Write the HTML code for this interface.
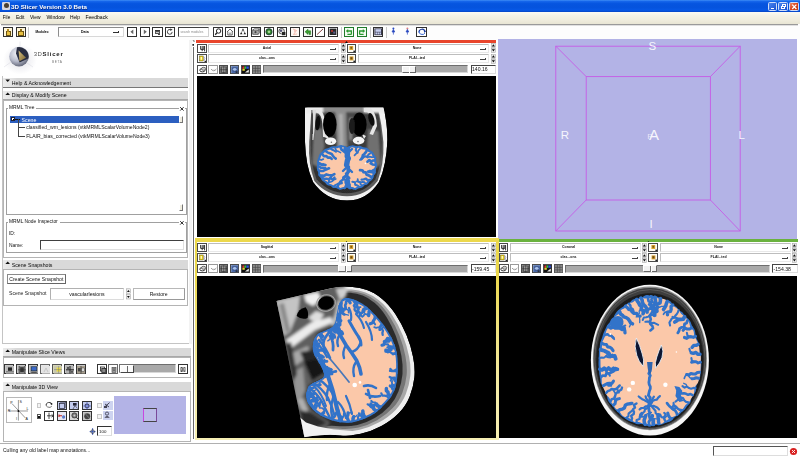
<!DOCTYPE html>
<html><head><meta charset="utf-8"><title>3D Slicer Version 3.0 Beta</title>
<style>
html,body{margin:0;padding:0;}
body{width:800px;height:457px;overflow:hidden;background:#fff;position:relative;font-family:"Liberation Sans",sans-serif;}
body div{position:absolute;}
svg{position:absolute;overflow:hidden;}
.t{overflow:visible;filter:blur(0.22px);}
</style></head><body>
<div style="left:0px;top:0px;width:800px;height:12px;background:linear-gradient(#3f8ef6 0%,#1565ea 12%,#0655e0 30%,#0553dd 60%,#0758e6 85%,#0644c4 100%);"></div>
<div style="left:2px;top:1.5px;width:8px;height:8px;background:#d8d8e0;border-radius:1px;"></div>
<div style="left:3.5px;top:3px;width:5px;height:5px;background:#4a4030;border-radius:3px;"></div>
<div class="t" style="left:11px;top:1.5px;height:10px;line-height:10px;font-size:6.2px;color:#fff;white-space:nowrap;font-weight:bold;text-shadow:0.5px 0.5px 0 #0a2a80;">3D Slicer Version 3.0 Beta</div>
<div style="left:767.5px;top:1.5px;width:9.5px;height:9px;background:linear-gradient(135deg,#4a86f0,#1c52d0);border:0.6px solid #cfdcf8;box-sizing:border-box;border-radius:1.5px;"><div style="left:2px;top:5.5px;width:3.5px;height:1.3px;background:#fff"></div></div>
<div style="left:778.3px;top:1.5px;width:9.5px;height:9px;background:linear-gradient(135deg,#4a86f0,#1c52d0);border:0.6px solid #cfdcf8;box-sizing:border-box;border-radius:1.5px;"><div style="left:3.2px;top:1.6px;width:3.4px;height:3px;border:0.8px solid #fff;box-sizing:border-box"></div><div style="left:1.8px;top:3.4px;width:3.6px;height:3.2px;border:0.8px solid #fff;box-sizing:border-box;background:#2a60d8"></div></div>
<div style="left:789.2px;top:1.5px;width:9.5px;height:9px;background:linear-gradient(135deg,#ec8a6a,#d8431c 50%,#c23a14);border:0.6px solid #cfdcf8;box-sizing:border-box;border-radius:1.5px;"><svg width="9" height="8" viewBox="0 0 9 8" style="left:0;top:0"><path d="M2.2 1.6 L6.4 6 M6.4 1.6 L2.2 6" stroke="#fff" stroke-width="1.3" fill="none"/></svg></div>
<div style="left:0px;top:12px;width:800px;height:12px;background:linear-gradient(#fbfaf4 0%,#f4f2e6 30%,#efecdd 70%,#e8e5d4 100%);"></div>
<div class="t" style="left:2.7px;top:12.7px;height:9px;line-height:9px;font-size:4.7px;color:#000;white-space:nowrap;">File</div>
<div class="t" style="left:16px;top:12.7px;height:9px;line-height:9px;font-size:4.9px;color:#000;white-space:nowrap;">Edit</div>
<div class="t" style="left:30px;top:12.7px;height:9px;line-height:9px;font-size:4.9px;color:#000;white-space:nowrap;">View</div>
<div class="t" style="left:46.4px;top:12.7px;height:9px;line-height:9px;font-size:5.2px;color:#000;white-space:nowrap;">Window</div>
<div class="t" style="left:70px;top:12.7px;height:9px;line-height:9px;font-size:4.9px;color:#000;white-space:nowrap;">Help</div>
<div class="t" style="left:85.4px;top:12.7px;height:9px;line-height:9px;font-size:5.1px;color:#000;white-space:nowrap;">Feedback</div>
<div style="left:0px;top:24px;width:800px;height:16px;background:#fdfdfd;"></div>
<div style="left:1px;top:24px;width:797px;height:0.8px;background:#9a9a9a;"></div>
<div style="left:1px;top:24.8px;width:797px;height:0.7px;background:#e0e0e0;"></div>
<div style="left:3.2px;top:27.2px;width:10px;height:9.6px;background:#fff6d8;border:0.8px solid #303030;box-sizing:border-box;"><div style="left:1.5px;top:2.6px;width:5.5px;height:5px;background:#e8c040;border:0.5px solid #6b5210;box-sizing:border-box"></div><div style="left:2.6px;top:1px;width:2.6px;height:2.4px;background:#b08a20"></div></div>
<div style="left:15.5px;top:27.2px;width:10px;height:9.6px;background:#fff6d8;border:0.8px solid #303030;box-sizing:border-box;"><div style="left:1.5px;top:3.2px;width:6px;height:4.6px;background:#e8c040;border:0.5px solid #6b5210;box-sizing:border-box"></div><div style="left:3px;top:0.8px;width:2.6px;height:3px;background:#8a6a18"></div></div>
<div style="left:28.2px;top:26.5px;width:0.7px;height:11px;background:#c8c8c8;"></div>
<div class="t" style="left:35.5px;top:28.200000000000003px;height:8px;line-height:8px;font-size:3.15px;color:#000;white-space:nowrap;font-weight:bold;">Modules:</div>
<div style="left:58px;top:27px;width:65.5px;height:9.6px;background:#fff;border:0.8px solid #8c8c8c;box-sizing:border-box;border-right-color:#d8d8d8;border-bottom-color:#d8d8d8;"></div>
<div class="t" style="left:58px;top:28.200000000000003px;height:8px;line-height:8px;font-size:3.55px;color:#000;white-space:nowrap;font-weight:bold;width:53.6px;text-align:center;">Data</div>
<div style="left:112.6px;top:32.2px;width:6px;height:1.3px;background:#303030;"></div>
<div style="left:118px;top:30.8px;width:0.8px;height:2.7px;background:#303030;"></div>
<div style="left:127px;top:27px;width:10px;height:9.6px;background:#fff;border:0.8px solid #303030;box-sizing:border-box;"><svg width="10" height="9" viewBox="0 0 10 9" style="left:-0.8px;top:-0.8px"><path d="M6.3 2.4 L3.4 4.8 L6.3 7.2 Z" fill="#666"/></svg></div>
<div style="left:139.5px;top:27px;width:10px;height:9.6px;background:#fff;border:0.8px solid #303030;box-sizing:border-box;"><svg width="10" height="9" viewBox="0 0 10 9" style="left:-0.8px;top:-0.8px"><path d="M3.8 2.4 L6.8 4.8 L3.8 7.2 Z" fill="#666"/></svg></div>
<div style="left:152.2px;top:27px;width:10.4px;height:9.6px;background:#fff;border:0.8px solid #303030;box-sizing:border-box;"><div style="left:1.4px;top:1.6px;width:5.6px;height:1.6px;background:#333"></div><div style="left:1.4px;top:3.4px;width:5.6px;height:2.8px;background:#ccc;border:0.5px solid #555;box-sizing:border-box"></div><div style="left:5px;top:6.3px;width:1.6px;height:1px;background:#444"></div></div>
<div style="left:165px;top:27px;width:10px;height:9.6px;background:#fff;border:0.8px solid #303030;box-sizing:border-box;"><svg width="10" height="9" viewBox="0 0 10 9" style="left:-0.8px;top:-0.8px"><path d="M7.2 4.9 A2.4 2.4 0 1 1 5.6 2.6" stroke="#333" stroke-width="0.9" fill="none"/><path d="M5 1.4 L7.6 2.4 L5.4 4 Z" fill="#333"/></svg></div>
<div style="left:178px;top:27px;width:31px;height:9.6px;background:#fff;border:0.8px solid #404040;box-sizing:border-box;border-right-color:#d0d0d0;border-bottom-color:#d0d0d0;"></div>
<div class="t" style="left:180.4px;top:28.200000000000003px;height:8px;line-height:8px;font-size:3.25px;color:#8a8a8a;white-space:nowrap;">search modules</div>
<div style="left:212.5px;top:27px;width:10px;height:9.6px;background:#fff;border:0.8px solid #303030;box-sizing:border-box;"><svg width="10" height="9.6" viewBox="0 0 10 9.6" style="left:-0.8px;top:-0.8px"><circle cx="5.6" cy="4" r="2.2" stroke="#222" stroke-width="1" fill="#fff"/><path d="M4 5.8 L2.2 7.8" stroke="#222" stroke-width="1.3"/></svg></div>
<div style="left:225.2px;top:27px;width:10px;height:9.6px;background:#fff;border:0.8px solid #303030;box-sizing:border-box;"><svg width="10" height="9.6" viewBox="0 0 10 9.6" style="left:-0.8px;top:-0.8px"><path d="M2 5 L5 2 L8 5 M2.8 4.6 V8 H7.2 V4.6" stroke="#444" stroke-width="0.8" fill="none"/><rect x="4.2" y="5.6" width="1.6" height="2.4" fill="#999"/></svg></div>
<div style="left:238px;top:27px;width:10px;height:9.6px;background:#fff;border:0.8px solid #303030;box-sizing:border-box;"><svg width="10" height="9.6" viewBox="0 0 10 9.6" style="left:-0.8px;top:-0.8px"><path d="M5 1.6 L6.3 3.6 H3.7 Z M3.2 5 L4.5 7.2 H1.9 Z M6.8 5 L8.1 7.2 H5.5 Z" fill="#222"/><path d="M5 3.5 L3.2 5.2 M5 3.5 L6.8 5.2" stroke="#222" stroke-width="0.5"/></svg></div>
<div style="left:251px;top:27px;width:10px;height:9.6px;background:#fff;border:0.8px solid #303030;box-sizing:border-box;"><svg width="10" height="9.6" viewBox="0 0 10 9.6" style="left:-0.8px;top:-0.8px"><rect x="1.8" y="3" width="5.4" height="4.2" fill="#bbb" stroke="#222" stroke-width="0.7"/><path d="M1.8 3 L3.4 1.8 H8.4 L7.2 3 M8.4 1.8 V6 L7.2 7.2" stroke="#222" stroke-width="0.6" fill="#ddd"/><circle cx="4.5" cy="5.1" r="1.2" fill="#444"/></svg></div>
<div style="left:264px;top:27px;width:10px;height:9.6px;background:#fff;border:0.8px solid #303030;box-sizing:border-box;"><svg width="10" height="9.6" viewBox="0 0 10 9.6" style="left:-0.8px;top:-0.8px"><circle cx="5" cy="4.8" r="3.2" fill="#2e7d2a" stroke="#123" stroke-width="0.6"/><circle cx="5" cy="4.8" r="1.4" fill="#9fd88f"/></svg></div>
<div style="left:276.8px;top:27px;width:10px;height:9.6px;background:#fff;border:0.8px solid #303030;box-sizing:border-box;"><svg width="10" height="9.6" viewBox="0 0 10 9.6" style="left:-0.8px;top:-0.8px"><circle cx="4.6" cy="4.2" r="2.8" fill="#ddd" stroke="#222" stroke-width="0.7"/><rect x="5" y="5" width="3.4" height="3.2" fill="#222"/><circle cx="4" cy="3.8" r="1.2" fill="#557"/></svg></div>
<div style="left:290px;top:27px;width:10px;height:9.6px;background:#fff8f4;border:0.8px solid #303030;box-sizing:border-box;"><svg width="10" height="9.6" viewBox="0 0 10 9.6" style="left:-0.8px;top:-0.8px"><path d="M3 2 L6.5 3.5 L3.5 7.5 L7 7" stroke="#f0b0a0" stroke-width="0.8" fill="none"/><circle cx="5" cy="4" r="1.2" fill="#f6c8c0"/></svg></div>
<div style="left:302.5px;top:27px;width:10px;height:9.6px;background:#f4fbf2;border:0.8px solid #303030;box-sizing:border-box;"><svg width="10" height="9.6" viewBox="0 0 10 9.6" style="left:-0.8px;top:-0.8px"><path d="M2 4.8 L5 2.2 V3.8 H7.6 V7.6 H6 V5.8 H5 V7.4 Z" fill="#3aa030" stroke="#1c6a18" stroke-width="0.5"/></svg></div>
<div style="left:315px;top:27px;width:10px;height:9.6px;background:#fff;border:0.8px solid #303030;box-sizing:border-box;"><svg width="10" height="9.6" viewBox="0 0 10 9.6" style="left:-0.8px;top:-0.8px"><path d="M2 7.6 L8 2" stroke="#7a3030" stroke-width="0.9"/></svg></div>
<div style="left:327.8px;top:27px;width:10px;height:9.6px;background:#fff;border:0.8px solid #303030;box-sizing:border-box;"><svg width="10" height="9.6" viewBox="0 0 10 9.6" style="left:-0.8px;top:-0.8px"><rect x="1.6" y="1.6" width="6.8" height="6.4" fill="#282828"/><rect x="3" y="3" width="2" height="2" fill="#a03030"/><rect x="5.2" y="4.6" width="2" height="2" fill="#5a5a8a"/></svg></div>
<div style="left:341px;top:26.5px;width:0.7px;height:11px;background:#c8c8c8;"></div>
<div style="left:344px;top:27px;width:10px;height:9.6px;background:#f4fbf2;border:0.9px solid #1f7a2a;box-sizing:border-box;"><svg width="10" height="9.6" viewBox="0 0 10 9.6" style="left:-0.8px;top:-0.8px"><path d="M7.4 7.4 H3.4 M7.4 7.4 V4 H3.6" stroke="#2a9a30" stroke-width="1.3" fill="none"/><path d="M4.2 2 L1.8 4 L4.2 6 Z" fill="#2a9a30"/></svg></div>
<div style="left:357px;top:27px;width:10px;height:9.6px;background:#f4fbf2;border:0.9px solid #1f7a2a;box-sizing:border-box;"><svg width="10" height="9.6" viewBox="0 0 10 9.6" style="left:-0.8px;top:-0.8px"><path d="M2.6 7.4 H6.6 M2.6 7.4 V4 H6.4" stroke="#2a9a30" stroke-width="1.3" fill="none"/><path d="M5.8 2 L8.2 4 L5.8 6 Z" fill="#2a9a30"/></svg></div>
<div style="left:370px;top:26.5px;width:0.7px;height:11px;background:#c8c8c8;"></div>
<div style="left:372.6px;top:27px;width:10.4px;height:9.6px;background:#fff;border:0.8px solid #303030;box-sizing:border-box;"><svg width="10.4" height="9.6" viewBox="0 0 10.4 9.6" style="left:-0.8px;top:-0.8px"><rect x="1.4" y="1.4" width="7.6" height="6.8" fill="#3a3a50"/><rect x="2.4" y="2.2" width="5.6" height="2.6" fill="#c8d0f0"/><rect x="2.4" y="5.4" width="1.6" height="2" fill="#c8d0f0"/><rect x="4.4" y="5.4" width="1.6" height="2" fill="#c8d0f0"/><rect x="6.4" y="5.4" width="1.6" height="2" fill="#c8d0f0"/></svg></div>
<div style="left:385.8px;top:26.5px;width:0.7px;height:11px;background:#c8c8c8;"></div>
<div style="left:389px;top:27px;width:10px;height:9.6px;"><svg width="10" height="9.6" viewBox="0 0 10 9.6" style="left:-0.8px;top:-0.8px"><circle cx="5.4" cy="2.6" r="1" fill="#2848c0"/><path d="M5.4 3.4 L6.8 6 H4 Z M5.4 6 V8.6" fill="#2848c0" stroke="#2848c0" stroke-width="0.7"/></svg></div>
<div style="left:403px;top:27px;width:10px;height:9.6px;"><svg width="10" height="9.6" viewBox="0 0 10 9.6" style="left:-0.8px;top:-0.8px"><circle cx="5.4" cy="2.6" r="1" fill="#e08080"/><path d="M5.4 3.4 L6.8 6 H4 Z M5.4 6 V8.6" fill="#2848c0" stroke="#2848c0" stroke-width="0.7"/></svg></div>
<div style="left:416.4px;top:27px;width:10.8px;height:9.6px;background:#fff;border:0.8px solid #303030;box-sizing:border-box;"><svg width="10.8" height="9.6" viewBox="0 0 10.8 9.6" style="left:-0.8px;top:-0.8px"><path d="M2.2 5.4 A3 2.4 0 1 1 8 5" stroke="#1c3c9c" stroke-width="1.2" fill="none"/><path d="M2.4 4 A3 2.4 0 0 0 8 6" stroke="#3a6ad8" stroke-width="1" fill="none"/><path d="M6.6 3.4 L8.8 4 L7.6 6 Z" fill="#1c3c9c"/></svg></div>
<svg width="70" height="36" viewBox="0 0 70 36" style="left:0;top:40px">
<defs>
<radialGradient id="lg1" cx="0.4" cy="0.35" r="0.7"><stop offset="0" stop-color="#f4f4f8"/><stop offset="0.55" stop-color="#b8bccc"/><stop offset="1" stop-color="#5a5e70"/></radialGradient>
<radialGradient id="lg2" cx="0.5" cy="0.5" r="0.5"><stop offset="0" stop-color="#c8c8d4" stop-opacity="0.55"/><stop offset="1" stop-color="#c8c8d4" stop-opacity="0"/></radialGradient>
<linearGradient id="lg3" x1="0" y1="0" x2="1" y2="1"><stop offset="0" stop-color="#d8c080"/><stop offset="1" stop-color="#7a6430"/></linearGradient>
<filter id="lb"><feGaussianBlur stdDeviation="0.5"/></filter>
</defs>
<ellipse cx="20" cy="19.5" rx="17" ry="15" fill="url(#lg2)"/>
<path d="M20 1.5 V8 M4 27 L11 22 M33 27 L27 23" stroke="#d8d8e0" stroke-width="0.5"/>
<g filter="url(#lb)">
<circle cx="19" cy="16.6" r="9.8" fill="url(#lg1)"/>
<path d="M17 7.2 A9.6 9.6 0 0 1 28.4 18.4 L19.6 22.6 L16 13.6 Z" fill="#2a2e40"/>
<path d="M18.6 10.4 L26 17.8 L19.4 21.2 Z" fill="url(#lg3)"/>
</g>
</svg>
<div class="t" style="left:33.8px;top:50.3px;height:9px;line-height:9px;font-size:6.0px;color:#555;white-space:nowrap;letter-spacing:0.3px;">3D</div>
<div class="t" style="left:42.5px;top:50.3px;height:9px;line-height:9px;font-size:6.0px;color:#222;white-space:nowrap;letter-spacing:0.8px;font-weight:bold;">Slicer</div>
<div class="t" style="left:52px;top:58.6px;height:6px;line-height:6px;font-size:3.2px;color:#777;white-space:nowrap;letter-spacing:0.6px;">BETA</div>
<div style="left:3px;top:78.2px;width:185px;height:8.6px;background:linear-gradient(90deg,#ebebeb 0,#e4e4e4 8px,#d9d9d9 14px,#d9d9d9 100%);"></div>
<div style="left:3px;top:86.8px;width:185px;height:0.8px;background:#777;"></div>
<svg width="6" height="4" viewBox="0 0 6 4" style="left:5.2px;top:79.4px"><path d="M0.4 0.6 L5 0.6 L2.7 3 Z" fill="#111"/></svg>
<div class="t" style="left:11.8px;top:78.7px;height:8px;line-height:8px;font-size:5.2px;color:#0a0a0a;white-space:nowrap;">Help &amp; Acknowledgement</div>
<div style="left:3px;top:91px;width:185px;height:8.4px;background:linear-gradient(90deg,#ebebeb 0,#e4e4e4 8px,#d9d9d9 14px,#d9d9d9 100%);"></div>
<div style="left:3px;top:99.4px;width:185px;height:0.8px;background:#a8a8a8;"></div>
<svg width="6" height="4" viewBox="0 0 6 4" style="left:5.2px;top:92.2px"><path d="M0.4 3 L2.7 0.6 L5 3 Z" fill="#111"/></svg>
<div class="t" style="left:11.8px;top:91.4px;height:8px;line-height:8px;font-size:5.2px;color:#0a0a0a;white-space:nowrap;">Display &amp; Modify Scene</div>
<div style="left:3px;top:100px;width:185px;height:157.5px;background:#fff;border:0.8px solid #b4b4b4;box-sizing:border-box;"></div>
<div style="left:5.6px;top:108px;width:181px;height:107px;border:0.8px solid #a0a0a0;box-sizing:border-box;"></div>
<div style="left:8.2px;top:105px;width:28px;height:6px;background:#fff;"></div>
<div class="t" style="left:9.0px;top:104.0px;height:8px;line-height:8px;font-size:4.9px;color:#111;white-space:nowrap;">MRML Tree</div>
<svg width="6" height="6" viewBox="0 0 6 6" style="left:178.6px;top:105.6px;background:#fff"><path d="M1.2 1.2 L4.6 4.6 M4.6 1.2 L1.2 4.6" stroke="#111" stroke-width="0.9"/></svg>
<div style="left:10px;top:116px;width:168.5px;height:6.8px;background:#2c5fc0;"></div>
<div style="left:11px;top:117.2px;width:4.2px;height:4.2px;background:#fff;border:0.6px solid #223;box-sizing:border-box;"><div style="left:0.6px;top:1.1px;width:1.8px;height:0.7px;background:#000"></div></div>
<div class="t" style="left:21.6px;top:115.5px;height:8px;line-height:8px;font-size:5.2px;color:#fff;white-space:nowrap;">Scene</div>
<div style="left:15.2px;top:119.2px;width:5px;height:0.6px;background:#111;"></div>
<div style="left:17.6px;top:119.4px;width:0.6px;height:16.6px;background:#444;"></div>
<div style="left:17.6px;top:127.4px;width:7.4px;height:0.55px;background:#444;"></div>
<div style="left:17.6px;top:135.6px;width:7.4px;height:0.55px;background:#444;"></div>
<div class="t" style="left:26.2px;top:123.4px;height:8px;line-height:8px;font-size:5.1px;color:#111;white-space:nowrap;">classified_wm_lesions (vtkMRMLScalarVolumeNode2)</div>
<div class="t" style="left:26.2px;top:131.8px;height:8px;line-height:8px;font-size:5.1px;color:#111;white-space:nowrap;">FLAIR_bias_corrected (vtkMRMLScalarVolumeNode3)</div>
<div style="left:178.8px;top:116px;width:4.6px;height:7px;background:#f0ede0;border:0.6px solid #fff;box-sizing:border-box;border-right-color:#777;border-bottom-color:#777;"></div>
<div style="left:178.8px;top:204.4px;width:4.6px;height:7px;background:#f0ede0;border:0.6px solid #fff;box-sizing:border-box;border-right-color:#777;border-bottom-color:#777;"></div>
<div style="left:5.6px;top:222px;width:181px;height:30.6px;border:0.8px solid #a0a0a0;box-sizing:border-box;"></div>
<div style="left:8.2px;top:219px;width:52px;height:6px;background:#fff;"></div>
<div class="t" style="left:9.0px;top:218.0px;height:8px;line-height:8px;font-size:4.9px;color:#111;white-space:nowrap;">MRML Node Inspector</div>
<svg width="6" height="6" viewBox="0 0 6 6" style="left:178.6px;top:219.6px;background:#fff"><path d="M1.2 1.2 L4.6 4.6 M4.6 1.2 L1.2 4.6" stroke="#111" stroke-width="0.9"/></svg>
<div class="t" style="left:9px;top:230.0px;height:8px;line-height:8px;font-size:4.9px;color:#111;white-space:nowrap;">ID:</div>
<div class="t" style="left:9px;top:241.6px;height:8px;line-height:8px;font-size:4.9px;color:#111;white-space:nowrap;">Name:</div>
<div style="left:40px;top:240.2px;width:144.4px;height:10px;background:#fff;border:0.8px solid #404040;box-sizing:border-box;border-right-color:#e0e0e0;border-bottom-color:#e0e0e0;"></div>
<div style="left:3px;top:260px;width:185px;height:8.6px;background:linear-gradient(90deg,#ebebeb 0,#e4e4e4 8px,#d9d9d9 14px,#d9d9d9 100%);"></div>
<div style="left:3px;top:268.6px;width:185px;height:0.8px;background:#a8a8a8;"></div>
<svg width="6" height="4" viewBox="0 0 6 4" style="left:5.2px;top:261.2px"><path d="M0.4 3 L2.7 0.6 L5 3 Z" fill="#111"/></svg>
<div class="t" style="left:11.8px;top:260.5px;height:8px;line-height:8px;font-size:5.2px;color:#0a0a0a;white-space:nowrap;">Scene Snapshots</div>
<div style="left:3px;top:269.4px;width:185px;height:37px;background:#fff;border:0.8px solid #b4b4b4;box-sizing:border-box;"></div>
<div style="left:7px;top:273.8px;width:58.6px;height:10.4px;background:#fff;border:0.7px solid #8a8a8a;box-sizing:border-box;border-right-color:#666;border-bottom-color:#666;"></div>
<div class="t" style="left:7px;top:275.0px;height:8px;line-height:8px;font-size:5.1px;color:#111;white-space:nowrap;width:58.6px;text-align:center;">Create Scene Snapshot</div>
<div class="t" style="left:9px;top:288.6px;height:8px;line-height:8px;font-size:5.1px;color:#222;white-space:nowrap;">Scene Snapshot</div>
<div style="left:49.6px;top:288.2px;width:74.6px;height:11.4px;background:#fff;border:0.7px solid #b0b0b0;box-sizing:border-box;border-right-color:#dcdcdc;border-bottom-color:#dcdcdc;"></div>
<div class="t" style="left:49.6px;top:290.2px;height:8px;line-height:8px;font-size:5.2px;color:#111;white-space:nowrap;width:74.6px;text-align:center;">vascularlesions</div>
<svg width="5" height="12" viewBox="0 0 5 12" style="left:125.6px;top:288px"><rect x="0.3" y="0.8" width="4.2" height="4.6" fill="#eee" stroke="#999" stroke-width="0.5"/><rect x="0.3" y="6.4" width="4.2" height="4.6" fill="#eee" stroke="#999" stroke-width="0.5"/><path d="M1 4 L2.4 2 L3.8 4 Z M1 8 L2.4 10 L3.8 8 Z" fill="#111"/></svg>
<div style="left:132.6px;top:288.2px;width:52px;height:11.4px;background:#fff;border:0.7px solid #b8b8b8;box-sizing:border-box;border-right-color:#999;border-bottom-color:#999;"></div>
<div class="t" style="left:132.6px;top:290.2px;height:8px;line-height:8px;font-size:5.1px;color:#111;white-space:nowrap;width:52px;text-align:center;">Restore</div>
<div style="left:1.6px;top:76px;width:187.4px;height:268px;border:0.7px solid #c4c4c4;box-sizing:border-box;border-top:none;border-right:none;"></div>
<div style="left:3px;top:347.6px;width:187.6px;height:8.6px;background:linear-gradient(90deg,#ebebeb 0,#e4e4e4 8px,#d9d9d9 14px,#d9d9d9 100%);"></div>
<div style="left:3px;top:356.20000000000005px;width:187.6px;height:0.8px;background:#a8a8a8;"></div>
<svg width="6" height="4" viewBox="0 0 6 4" style="left:5.2px;top:348.8px"><path d="M0.4 3 L2.7 0.6 L5 3 Z" fill="#111"/></svg>
<div class="t" style="left:11.8px;top:348.1px;height:8px;line-height:8px;font-size:5.2px;color:#0a0a0a;white-space:nowrap;">Manipulate Slice Views</div>
<div style="left:3px;top:357px;width:187.6px;height:21px;background:#fff;border:0.8px solid #b4b4b4;box-sizing:border-box;"></div>
<div style="left:3px;top:382px;width:187.6px;height:8.6px;background:linear-gradient(90deg,#ebebeb 0,#e4e4e4 8px,#d9d9d9 14px,#d9d9d9 100%);"></div>
<div style="left:3px;top:390.6px;width:187.6px;height:0.8px;background:#a8a8a8;"></div>
<svg width="6" height="4" viewBox="0 0 6 4" style="left:5.2px;top:383.2px"><path d="M0.4 3 L2.7 0.6 L5 3 Z" fill="#111"/></svg>
<div class="t" style="left:11.8px;top:382.5px;height:8px;line-height:8px;font-size:5.2px;color:#0a0a0a;white-space:nowrap;">Manipulate 3D View</div>
<div style="left:3px;top:391.4px;width:187.6px;height:50.6px;background:#fff;border:0.8px solid #b4b4b4;box-sizing:border-box;"></div>
<div style="left:4.2px;top:364.2px;width:10px;height:9.6px;background:#c8c8c8;border:0.7px solid #333;box-sizing:border-box;"><svg width="10" height="9.6" viewBox="0 0 10 9.6" style="left:-0.7px;top:-0.7px"><rect x="1" y="1" width="8" height="7.6" fill="#b8b8b8"/><rect x="3" y="2.4" width="4" height="3.4" fill="#222"/><path d="M1 6.8 H9" stroke="#444" stroke-width="0.6"/></svg></div>
<div style="left:16.2px;top:364.2px;width:10px;height:9.6px;background:#c8c8c8;border:0.7px solid #333;box-sizing:border-box;"><svg width="10" height="9.6" viewBox="0 0 10 9.6" style="left:-0.7px;top:-0.7px"><rect x="1" y="1" width="8" height="7.6" fill="#9a9a9a"/><rect x="3.2" y="2.2" width="3.6" height="5" fill="#333"/><path d="M1 4.8 H9 M2.6 1 V8.6 M7.4 1 V8.6" stroke="#222" stroke-width="0.5"/></svg></div>
<div style="left:28.2px;top:364.2px;width:10px;height:9.6px;background:#c8c8c8;border:0.7px solid #333;box-sizing:border-box;"><svg width="10" height="9.6" viewBox="0 0 10 9.6" style="left:-0.7px;top:-0.7px"><rect x="1" y="1" width="8" height="7.6" fill="#a8a8a8"/><rect x="2.2" y="1.8" width="5.6" height="4" fill="#3a68c8" stroke="#123" stroke-width="0.5"/><rect x="2.2" y="6.6" width="5.6" height="1.4" fill="#555"/></svg></div>
<div style="left:40.2px;top:364.2px;width:10px;height:9.6px;background:#e8e8e8;border:0.7px solid #666;box-sizing:border-box;"><svg width="10" height="9.6" viewBox="0 0 10 9.6" style="left:-0.7px;top:-0.7px"><rect x="1" y="1" width="8" height="7.6" fill="#e4e4e4"/><path d="M3 7 L5 3 L7 7" stroke="#bbb" stroke-width="0.7" fill="none"/></svg></div>
<div style="left:52.2px;top:364.2px;width:10px;height:9.6px;background:#d8d8b8;border:0.7px solid #555;box-sizing:border-box;"><svg width="10" height="9.6" viewBox="0 0 10 9.6" style="left:-0.7px;top:-0.7px"><rect x="1" y="1" width="8" height="7.6" fill="#c8c8b0"/><rect x="3.6" y="2.6" width="4" height="4" fill="#f0e040"/><path d="M5.6 1 V8.6 M1 4.6 H9" stroke="#777" stroke-width="0.5"/></svg></div>
<div style="left:64.2px;top:364.2px;width:10px;height:9.6px;background:#c8c8c8;border:0.7px solid #333;box-sizing:border-box;"><svg width="10" height="9.6" viewBox="0 0 10 9.6" style="left:-0.7px;top:-0.7px"><rect x="1" y="1" width="8" height="7.6" fill="#b0b0b0"/><path d="M5 1 V8.6 M1 4.8 H9" stroke="#222" stroke-width="1"/><rect x="2" y="2" width="2" height="2" fill="#555"/><rect x="6" y="5.8" width="2" height="2" fill="#555"/></svg></div>
<div style="left:76px;top:364.2px;width:10px;height:9.6px;background:#c8c8c8;border:0.7px solid #333;box-sizing:border-box;"><svg width="10" height="9.6" viewBox="0 0 10 9.6" style="left:-0.7px;top:-0.7px"><rect x="1" y="1" width="8" height="7.6" fill="#a8a090"/><rect x="2" y="3" width="2.6" height="3.4" fill="#444"/><rect x="5.6" y="3" width="2.6" height="3.4" fill="#ddd" stroke="#333" stroke-width="0.4"/><path d="M5 1 V8.6" stroke="#222" stroke-width="0.6"/></svg></div>
<div style="left:97.2px;top:364.2px;width:10px;height:9.6px;background:#fff;border:0.7px solid #333;box-sizing:border-box;"><svg width="10" height="9.6" viewBox="0 0 10 9.6" style="left:-0.7px;top:-0.7px"><rect x="2.4" y="2" width="4" height="4" fill="none" stroke="#222" stroke-width="0.8"/><rect x="3.8" y="3.4" width="4" height="4" fill="#888" stroke="#222" stroke-width="0.8"/></svg></div>
<div style="left:108.2px;top:364.2px;width:10px;height:9.6px;background:#fff;border:0.7px solid #666;box-sizing:border-box;"><svg width="10" height="9.6" viewBox="0 0 10 9.6" style="left:-0.7px;top:-0.7px"><rect x="3" y="2.4" width="4" height="5" fill="#999" stroke="#444" stroke-width="0.6"/><path d="M4 4 H6 M4 5.4 H6" stroke="#333" stroke-width="0.5"/></svg></div>
<div style="left:119px;top:364.4px;width:57px;height:9px;background:#a9a9a9;border:0.7px solid #6e6e6e;box-sizing:border-box;border-right-color:#d8d8d8;border-bottom-color:#d8d8d8;"></div>
<div style="left:119.6px;top:365.0px;width:14.6px;height:7.8px;background:#fafafa;border:0.6px solid #fff;box-sizing:border-box;border-right-color:#444;border-bottom-color:#444;"><div style="left:6.6px;top:0.4px;width:0.7px;height:5.8px;background:#666"></div></div>
<div style="left:177.6px;top:364.2px;width:10px;height:9.6px;background:#fff;border:0.7px solid #333;box-sizing:border-box;"><svg width="10" height="9.6" viewBox="0 0 10 9.6" style="left:-0.7px;top:-0.7px"><rect x="2.6" y="2.2" width="2" height="4.6" fill="#222"/><rect x="5.4" y="2.2" width="2" height="4.6" fill="#444"/><rect x="3.2" y="3" width="0.8" height="2.6" fill="#ccc"/><rect x="6" y="3" width="0.8" height="2.6" fill="#ccc"/></svg></div>
<div style="left:5.8px;top:396.6px;width:26px;height:26.6px;background:#fff;border:0.7px solid #b8b8b8;box-sizing:border-box;"></div>
<svg width="26" height="26.6" viewBox="0 0 26 26.6" style="left:5.8px;top:396.6px"><g stroke="#333" stroke-width="0.5"><path d="M12.4 3 V23.6 M3 14 H22 M6 6.6 L19.4 21"/></g><circle cx="12.4" cy="14" r="0.9" fill="#111"/><g font-family="Liberation Sans, sans-serif" font-size="3.6" fill="#111"><text x="13.6" y="6.4">S</text><text x="20.6" y="13">L</text><text x="1.8" y="15.4">R</text><text x="10" y="23.4">I</text><text x="19.4" y="22.6">A</text><text x="4.2" y="6.6">P</text></g></svg>
<div style="left:36.6px;top:403px;width:4.8px;height:4.8px;background:#f4f4f4;border:0.6px solid #c8c8c8;box-sizing:border-box;"></div>
<div style="left:36.6px;top:414px;width:4.8px;height:4.8px;background:#fff;border:0.6px solid #555;box-sizing:border-box;"><div style="left:0.9px;top:0.9px;width:1.8px;height:1.8px;background:#111"></div></div>
<div style="left:44.2px;top:400.6px;width:10px;height:9px;"><svg width="10" height="9.6" viewBox="0 0 10 9.6" style="left:-0.7px;top:-0.7px"><path d="M2.4 5.4 A2.8 2.2 0 1 1 7.8 5" stroke="#333" stroke-width="0.9" fill="none"/><path d="M2.6 3.8 A2.8 2.2 0 0 0 7.8 6.2" stroke="#555" stroke-width="0.8" fill="none"/><path d="M6.4 2.6 L8.6 3.4 L7 5 Z" fill="#222"/></svg></div>
<div style="left:44.2px;top:411px;width:10px;height:9.6px;background:#fff;border:0.7px solid #333;box-sizing:border-box;"><svg width="10" height="9.6" viewBox="0 0 10 9.6" style="left:-0.7px;top:-0.7px"><path d="M4 1.6 V8 M2 4.8 H8.4 M6.6 3.4 L8.4 4.8 L6.6 6.2" stroke="#222" stroke-width="0.8" fill="none"/></svg></div>
<div style="left:57px;top:400.6px;width:10px;height:9.8px;background:#c4ccee;border:0.7px solid #333;box-sizing:border-box;"><svg width="10" height="9.6" viewBox="0 0 10 9.6" style="left:-0.7px;top:-0.7px"><rect x="2.4" y="2.4" width="5.2" height="5" fill="none" stroke="#223" stroke-width="0.7"/><path d="M2.4 2.4 L3.8 1.4 H8.6 V6.2 L7.6 7.4 M7.6 2.4 L8.6 1.4" stroke="#223" stroke-width="0.5" fill="none"/></svg></div>
<div style="left:69.4px;top:400.6px;width:10px;height:9.8px;background:#c4ccee;border:0.7px solid #333;box-sizing:border-box;"><svg width="10" height="9.6" viewBox="0 0 10 9.6" style="left:-0.7px;top:-0.7px"><rect x="3" y="2" width="3.6" height="2.6" fill="#223"/><path d="M5 4.6 L3 8 M5 4.6 L7.4 7.4" stroke="#223" stroke-width="0.6"/></svg></div>
<div style="left:81.6px;top:400.6px;width:10px;height:9.8px;background:#c4ccee;border:0.7px solid #333;box-sizing:border-box;"><svg width="10" height="9.6" viewBox="0 0 10 9.6" style="left:-0.7px;top:-0.7px"><path d="M5 1.4 V8.4 M1.6 5 H8.6" stroke="#2838a0" stroke-width="0.9"/><rect x="3.2" y="3.2" width="3.6" height="3.4" fill="#8090d8" stroke="#223" stroke-width="0.5"/></svg></div>
<div style="left:57px;top:411px;width:10px;height:9.8px;background:#e8e8f4;border:0.7px solid #333;box-sizing:border-box;"><svg width="10" height="9.6" viewBox="0 0 10 9.6" style="left:-0.7px;top:-0.7px"><path d="M2 4.8 H5 M2 3.6 V6" stroke="#c02020" stroke-width="1.1"/><ellipse cx="6.6" cy="6" rx="1.6" ry="1.8" fill="#5878c8"/></svg></div>
<div style="left:69.4px;top:411px;width:10px;height:9.8px;background:#d8d8d8;border:0.7px solid #333;box-sizing:border-box;"><svg width="10" height="9.6" viewBox="0 0 10 9.6" style="left:-0.7px;top:-0.7px"><circle cx="4.4" cy="4.4" r="2.6" fill="#777" stroke="#222" stroke-width="0.6"/><circle cx="4.4" cy="4.4" r="1" fill="#ccc"/><path d="M6.2 6.4 L8.2 8" stroke="#222" stroke-width="0.9"/></svg></div>
<div style="left:81.6px;top:411px;width:10px;height:9.8px;background:#c8c8c8;border:0.7px solid #333;box-sizing:border-box;"><svg width="10" height="9.6" viewBox="0 0 10 9.6" style="left:-0.7px;top:-0.7px"><circle cx="5.2" cy="5.2" r="3" fill="#444"/><path d="M2.6 2 L7.8 7.6" stroke="#888" stroke-width="0.8"/></svg></div>
<div style="left:97px;top:403px;width:4.8px;height:4.8px;background:#f4f4f4;border:0.6px solid #c8c8c8;box-sizing:border-box;"></div>
<div style="left:97px;top:414px;width:4.8px;height:4.8px;background:#f4f4f4;border:0.6px solid #c8c8c8;box-sizing:border-box;"></div>
<div style="left:103px;top:400.6px;width:10px;height:9.4px;background:#cdd3f0;"><svg width="10" height="9.6" viewBox="0 0 10 9.6" style="left:-0.7px;top:-0.7px"><path d="M2.6 7 L7.6 2.6 M3 4 L7 7" stroke="#223" stroke-width="0.8"/><rect x="2" y="6" width="3" height="2" fill="#445"/></svg></div>
<div style="left:103px;top:411px;width:10px;height:9.4px;background:#cdd3f0;"><svg width="10" height="9.6" viewBox="0 0 10 9.6" style="left:-0.7px;top:-0.7px"><circle cx="5" cy="3.6" r="1.6" fill="none" stroke="#223" stroke-width="0.7"/><path d="M2.4 7.8 Q5 4 7.8 7.8 Z" fill="#445"/></svg></div>
<svg width="9" height="9" viewBox="0 0 9 9" style="left:87.6px;top:426.6px"><path d="M4.6 1 V8 M1.6 4.6 H7.6" stroke="#3050b0" stroke-width="0.8"/><circle cx="4.6" cy="4.6" r="1.8" fill="none" stroke="#223" stroke-width="0.7"/></svg>
<div style="left:97.4px;top:426.2px;width:15px;height:10px;background:#fff;border:0.8px solid #333;box-sizing:border-box;border-right-color:#ddd;border-bottom-color:#ddd;"></div>
<div class="t" style="left:99px;top:427.9px;height:7px;line-height:7px;font-size:4.4px;color:#111;white-space:nowrap;">100</div>
<div style="left:114.2px;top:396.2px;width:71.4px;height:38px;background:#b3b3e6;"></div>
<div style="left:142.6px;top:408.2px;width:14.4px;height:13.4px;background:#bcbce8;border:0.8px solid #444;box-sizing:border-box;border-left:1px solid #c848e0;border-right:0.8px solid #7a4a9a;"></div>
<div style="left:188.8px;top:40px;width:3.6px;height:304px;background:#f3f3f3;"></div>
<div style="left:193px;top:47px;width:0.7px;height:392px;background:#6a6a6a;"></div>
<svg width="3" height="7" viewBox="0 0 3 7" style="left:191.6px;top:39.6px"><path d="M0.4 0.4 L2.4 0.4 L2.4 2 Z M0.4 4 L2 4 L2 5.8 L0.4 5.8Z" fill="#222"/></svg>
<div class="t" style="left:3px;top:446.4px;height:8px;line-height:8px;font-size:5px;color:#111;white-space:nowrap;">Culling any old label map annotations...</div>
<div style="left:712.6px;top:445.6px;width:75px;height:10.2px;background:#fff;border:0.8px solid #555;box-sizing:border-box;border-right-color:#ddd;border-bottom-color:#ddd;"></div>
<svg width="9" height="9" viewBox="0 0 9 9" style="left:789px;top:446.5px"><circle cx="4.5" cy="4.5" r="3.6" fill="#d82020"/><path d="M3 3 L6 6 M6 3 L3 6" stroke="#fff" stroke-width="0.9"/></svg>
<svg width="299" height="199.8" viewBox="0 -0.8 299 199.8" style="left:498px;top:39.2px;background:#b3b3e6">
<g stroke="#c65be6" stroke-width="0.9" fill="none">
<rect x="57.8" y="6.4" width="184.4" height="184.8"/>
<rect x="88.2" y="36.8" width="124.2" height="123.4"/>
<path d="M57.8 6.4 L88.2 36.8 M242.2 6.4 L212.4 36.8 M57.8 191.2 L88.2 160.2 M242.2 191.2 L212.4 160.2"/>
</g>
<g fill="#f6f6fd" font-family="Liberation Sans, sans-serif" text-anchor="middle">
<text x="154.4" y="10.6" font-size="11.5">S</text>
<text x="67" y="99.2" font-size="11.5">R</text>
<text x="243.6" y="99.2" font-size="11.5">L</text>
<text x="153.2" y="188.6" font-size="11.5">I</text>
<text x="152" y="99.6" font-size="8" opacity="0.75">P</text>
<text x="156" y="100" font-size="15">A</text>
</g>
</svg>
<div style="left:196px;top:40px;width:2px;height:3.2px;background:#e8452c;"></div>
<div style="left:197px;top:40px;width:299px;height:3.2px;background:#e8452c;"></div>
<svg width="3" height="2" viewBox="0 0 3 2" style="left:345px;top:41.4px"><path d="M0 2 L1.5 0 L3 2Z" fill="#111"/></svg>
<div style="left:197px;top:43.2px;width:299px;height:33.8px;background:#fff;"></div>
<div style="left:197.2px;top:43.6px;width:9.4px;height:9.4px;background:#fff;border:0.6px solid #4a4a4a;box-sizing:border-box;"><svg width="9.4" height="9.4" viewBox="0 0 9.4 9.4" style="left:-0.7px;top:-0.7px"><path d="M2.6 2 V5.4 H5.8 V2 M4.2 2 V7.2 M6.6 2 V7.4" stroke="#222" stroke-width="0.9" fill="none"/></svg></div>
<div style="left:208px;top:43.6px;width:131px;height:9.4px;background:#fff;border:0.6px solid #bdbdbd;box-sizing:border-box;border-right-color:#e8e8e8;border-bottom-color:#e8e8e8;"></div>
<div class="t" style="left:208px;top:45.00000000000001px;height:7px;line-height:7px;font-size:3.5px;color:#111;white-space:nowrap;font-weight:bold;width:118px;text-align:center;">Axial</div>
<div style="left:330.2px;top:48.7px;width:5.6px;height:1.1px;background:#444;"></div>
<div style="left:335.2px;top:47.50000000000001px;width:0.7px;height:2.3px;background:#444;"></div>
<svg width="5" height="10" viewBox="0 0 5 10" style="left:340.6px;top:43.4px"><rect x="0.3" y="0.3" width="4.2" height="4.3" fill="#eee" stroke="#999" stroke-width="0.5"/><rect x="0.3" y="5.2" width="4.2" height="4.3" fill="#eee" stroke="#999" stroke-width="0.5"/><path d="M0.8 3.6 L2.4 1.2 L4 3.6 Z M0.8 6.2 L2.4 8.6 L4 6.2 Z" fill="#111"/></svg>
<div style="left:346.6px;top:43.6px;width:9.4px;height:9.4px;background:#fffdf4;border:0.6px solid #4a4a4a;box-sizing:border-box;"><svg width="9.4" height="9.4" viewBox="0 0 9.4 9.4" style="left:-0.7px;top:-0.7px"><rect x="2.4" y="2" width="3.8" height="4" fill="#e0a830"/><rect x="3.4" y="2.8" width="1.8" height="2" fill="#7a5a18"/><rect x="6.4" y="6.6" width="1.6" height="1.4" fill="#222"/></svg></div>
<div style="left:358px;top:43.6px;width:131px;height:9.4px;background:#fff;border:0.6px solid #bdbdbd;box-sizing:border-box;border-right-color:#e8e8e8;border-bottom-color:#e8e8e8;"></div>
<div class="t" style="left:358px;top:45.00000000000001px;height:7px;line-height:7px;font-size:3.5px;color:#111;white-space:nowrap;font-weight:bold;width:118px;text-align:center;">None</div>
<div style="left:480.2px;top:48.7px;width:5.6px;height:1.1px;background:#444;"></div>
<div style="left:485.2px;top:47.50000000000001px;width:0.7px;height:2.3px;background:#444;"></div>
<svg width="5" height="10" viewBox="0 0 5 10" style="left:490.8px;top:43.4px"><rect x="0.3" y="0.3" width="4.2" height="4.3" fill="#eee" stroke="#999" stroke-width="0.5"/><rect x="0.3" y="5.2" width="4.2" height="4.3" fill="#eee" stroke="#999" stroke-width="0.5"/><path d="M0.8 3.6 L2.4 1.2 L4 3.6 Z M0.8 6.2 L2.4 8.6 L4 6.2 Z" fill="#111"/></svg>
<div style="left:197.2px;top:53.8px;width:9.4px;height:9.4px;background:#fff;border:0.6px solid #4a4a4a;box-sizing:border-box;"><svg width="9.4" height="9.4" viewBox="0 0 9.4 9.4" style="left:-0.7px;top:-0.7px"><rect x="1.6" y="2" width="3.6" height="5" fill="#e8d020" stroke="#5a5210" stroke-width="0.5"/><rect x="2.6" y="3" width="1.4" height="2.8" fill="#fff6c0"/><path d="M5.8 2.4 Q7.8 4.4 5.8 7" stroke="#9a98c0" stroke-width="0.9" fill="none"/><rect x="6.6" y="6.8" width="1.4" height="1.2" fill="#222"/></svg></div>
<div style="left:208px;top:53.8px;width:131px;height:9.4px;background:#fff;border:0.6px solid #bdbdbd;box-sizing:border-box;border-right-color:#e8e8e8;border-bottom-color:#e8e8e8;"></div>
<div class="t" style="left:208px;top:55.2px;height:7px;line-height:7px;font-size:3.5px;color:#111;white-space:nowrap;font-weight:bold;width:118px;text-align:center;">clas...ons</div>
<div style="left:330.2px;top:58.9px;width:5.6px;height:1.1px;background:#444;"></div>
<div style="left:335.2px;top:57.7px;width:0.7px;height:2.3px;background:#444;"></div>
<svg width="5" height="10" viewBox="0 0 5 10" style="left:340.6px;top:53.599999999999994px"><rect x="0.3" y="0.3" width="4.2" height="4.3" fill="#eee" stroke="#999" stroke-width="0.5"/><rect x="0.3" y="5.2" width="4.2" height="4.3" fill="#eee" stroke="#999" stroke-width="0.5"/><path d="M0.8 3.6 L2.4 1.2 L4 3.6 Z M0.8 6.2 L2.4 8.6 L4 6.2 Z" fill="#111"/></svg>
<div style="left:346.6px;top:53.8px;width:9.4px;height:9.4px;background:#fffdf4;border:0.6px solid #4a4a4a;box-sizing:border-box;"><svg width="9.4" height="9.4" viewBox="0 0 9.4 9.4" style="left:-0.7px;top:-0.7px"><rect x="2.6" y="2.4" width="3.8" height="4" fill="#d8a030"/><rect x="3.4" y="3.2" width="2" height="2.2" fill="#6a4a14"/><rect x="6.4" y="6.6" width="1.6" height="1.4" fill="#222"/></svg></div>
<div style="left:358px;top:53.8px;width:131px;height:9.4px;background:#fff;border:0.6px solid #bdbdbd;box-sizing:border-box;border-right-color:#e8e8e8;border-bottom-color:#e8e8e8;"></div>
<div class="t" style="left:358px;top:55.2px;height:7px;line-height:7px;font-size:3.5px;color:#111;white-space:nowrap;font-weight:bold;width:118px;text-align:center;">FLAI...ted</div>
<div style="left:480.2px;top:58.9px;width:5.6px;height:1.1px;background:#444;"></div>
<div style="left:485.2px;top:57.7px;width:0.7px;height:2.3px;background:#444;"></div>
<svg width="5" height="10" viewBox="0 0 5 10" style="left:490.8px;top:53.599999999999994px"><rect x="0.3" y="0.3" width="4.2" height="4.3" fill="#eee" stroke="#999" stroke-width="0.5"/><rect x="0.3" y="5.2" width="4.2" height="4.3" fill="#eee" stroke="#999" stroke-width="0.5"/><path d="M0.8 3.6 L2.4 1.2 L4 3.6 Z M0.8 6.2 L2.4 8.6 L4 6.2 Z" fill="#111"/></svg>
<div style="left:197.2px;top:64.6px;width:10px;height:9px;background:#fff;border:0.6px solid #4a4a4a;box-sizing:border-box;"><svg width="9.4" height="9.4" viewBox="0 0 9.4 9.4" style="left:-0.7px;top:-0.7px"><ellipse cx="4.4" cy="5.2" rx="2.6" ry="1.7" stroke="#222" stroke-width="0.9" fill="none"/><ellipse cx="5.6" cy="3.8" rx="2.2" ry="1.5" stroke="#555" stroke-width="0.8" fill="#ccc"/></svg></div>
<div style="left:208.2px;top:64.6px;width:9.4px;height:9px;background:#fff;border:0.6px solid #999;box-sizing:border-box;"><svg width="9.4" height="9.4" viewBox="0 0 9.4 9.4" style="left:-0.7px;top:-0.7px"><path d="M2 4 Q4.6 7.6 7.4 4" stroke="#888" stroke-width="0.8" fill="#eee"/></svg></div>
<div style="left:219px;top:64.6px;width:9.4px;height:9px;background:#fff;border:0.6px solid #4a4a4a;box-sizing:border-box;"><svg width="9.4" height="9.4" viewBox="0 0 9.4 9.4" style="left:-0.7px;top:-0.7px"><rect x="1.2" y="1.2" width="7" height="7" fill="#555"/><rect x="3" y="2.4" width="3.4" height="4.6" fill="#999"/><path d="M4.7 1.2 V8.2 M1.2 4.7 H8.2" stroke="#222" stroke-width="0.5"/></svg></div>
<div style="left:230px;top:64.6px;width:9.4px;height:9px;background:#fff;border:0.6px solid #4a4a4a;box-sizing:border-box;"><svg width="9.4" height="9.4" viewBox="0 0 9.4 9.4" style="left:-0.7px;top:-0.7px"><rect x="1.2" y="1.2" width="7" height="7" fill="#4a6aa8"/><ellipse cx="4.7" cy="4.4" rx="2.4" ry="1.8" fill="#a8c4f0" stroke="#1c2c60" stroke-width="0.6"/><rect x="5.6" y="6.4" width="2" height="1.4" fill="#222"/></svg></div>
<div style="left:241px;top:64.6px;width:9.4px;height:9px;background:#fff;border:0.6px solid #4a4a4a;box-sizing:border-box;"><svg width="9.4" height="9.4" viewBox="0 0 9.4 9.4" style="left:-0.7px;top:-0.7px"><rect x="1" y="1" width="7.4" height="7.4" fill="#111"/><rect x="1.4" y="1.4" width="2" height="2.4" fill="#e03030"/><rect x="3.4" y="1.4" width="2" height="2.4" fill="#30c040"/><rect x="5.4" y="1.4" width="2.4" height="2.4" fill="#3050e0"/><rect x="1.4" y="3.8" width="2.4" height="2" fill="#e0d030"/><path d="M4 7.6 L7.8 4.4 V7.6 Z" fill="#eee"/></svg></div>
<div style="left:252px;top:64.6px;width:9.4px;height:9px;background:#fff;border:0.6px solid #555;box-sizing:border-box;"><svg width="9.4" height="9.4" viewBox="0 0 9.4 9.4" style="left:-0.7px;top:-0.7px"><rect x="1" y="1" width="7.4" height="7.4" fill="#8a8a8a"/><path d="M3.4 1 V8.4 M5.9 1 V8.4 M1 3.4 H8.4 M1 5.9 H8.4" stroke="#444" stroke-width="0.6"/></svg></div>
<div style="left:263px;top:65.39999999999999px;width:205.4px;height:8px;background:#a9a9a9;border:0.7px solid #6e6e6e;box-sizing:border-box;border-right-color:#d8d8d8;border-bottom-color:#d8d8d8;"></div>
<div style="left:401.6px;top:66.0px;width:14px;height:6.8px;background:#f2f2f2;border:0.6px solid #fff;box-sizing:border-box;border-right-color:#666;border-bottom-color:#666;"><div style="left:6.2px;top:0;width:0.7px;height:5.6px;background:#777"></div><div style="left:6.9px;top:0;width:0.6px;height:5.6px;background:#fff"></div></div>
<div style="left:470.6px;top:64.8px;width:25.4px;height:9.4px;background:#fff;border:0.8px solid #444;box-sizing:border-box;border-right-color:#ddd;border-bottom-color:#ddd;"></div>
<div class="t" style="left:472px;top:66.3px;height:7px;line-height:7px;font-size:5.1px;color:#111;white-space:nowrap;">140.16</div>
<div style="left:197px;top:77px;width:299px;height:0px;background:#000;"></div>
<div style="left:197px;top:75.6px;width:299px;height:161.8px;background:#000;"></div>
<div style="left:194.6px;top:237.6px;width:304px;height:202px;background:#ecd84c;"></div>
<div style="left:194.6px;top:276px;width:304px;height:163.6px;background:linear-gradient(#ecd84c,#f0e27c 30%,#f5eca8 70%,#f6efb4);"></div>
<div style="left:197px;top:239.2px;width:299px;height:3.2px;background:#ecd84c;"></div>
<svg width="3" height="2" viewBox="0 0 3 2" style="left:345px;top:240.6px"><path d="M0 2 L1.5 0 L3 2Z" fill="#111"/></svg>
<div style="left:197px;top:242.39999999999998px;width:299px;height:33.8px;background:#fff;"></div>
<div style="left:197.2px;top:242.79999999999998px;width:9.4px;height:9.4px;background:#fff;border:0.6px solid #4a4a4a;box-sizing:border-box;"><svg width="9.4" height="9.4" viewBox="0 0 9.4 9.4" style="left:-0.7px;top:-0.7px"><path d="M2.6 2 V5.4 H5.8 V2 M4.2 2 V7.2 M6.6 2 V7.4" stroke="#222" stroke-width="0.9" fill="none"/></svg></div>
<div style="left:208px;top:242.79999999999998px;width:131px;height:9.4px;background:#fff;border:0.6px solid #bdbdbd;box-sizing:border-box;border-right-color:#e8e8e8;border-bottom-color:#e8e8e8;"></div>
<div class="t" style="left:208px;top:244.19999999999996px;height:7px;line-height:7px;font-size:3.5px;color:#111;white-space:nowrap;font-weight:bold;width:118px;text-align:center;">Sagittal</div>
<div style="left:330.2px;top:247.89999999999998px;width:5.6px;height:1.1px;background:#444;"></div>
<div style="left:335.2px;top:246.69999999999996px;width:0.7px;height:2.3px;background:#444;"></div>
<svg width="5" height="10" viewBox="0 0 5 10" style="left:340.6px;top:242.6px"><rect x="0.3" y="0.3" width="4.2" height="4.3" fill="#eee" stroke="#999" stroke-width="0.5"/><rect x="0.3" y="5.2" width="4.2" height="4.3" fill="#eee" stroke="#999" stroke-width="0.5"/><path d="M0.8 3.6 L2.4 1.2 L4 3.6 Z M0.8 6.2 L2.4 8.6 L4 6.2 Z" fill="#111"/></svg>
<div style="left:346.6px;top:242.79999999999998px;width:9.4px;height:9.4px;background:#fffdf4;border:0.6px solid #4a4a4a;box-sizing:border-box;"><svg width="9.4" height="9.4" viewBox="0 0 9.4 9.4" style="left:-0.7px;top:-0.7px"><rect x="2.4" y="2" width="3.8" height="4" fill="#e0a830"/><rect x="3.4" y="2.8" width="1.8" height="2" fill="#7a5a18"/><rect x="6.4" y="6.6" width="1.6" height="1.4" fill="#222"/></svg></div>
<div style="left:358px;top:242.79999999999998px;width:131px;height:9.4px;background:#fff;border:0.6px solid #bdbdbd;box-sizing:border-box;border-right-color:#e8e8e8;border-bottom-color:#e8e8e8;"></div>
<div class="t" style="left:358px;top:244.19999999999996px;height:7px;line-height:7px;font-size:3.5px;color:#111;white-space:nowrap;font-weight:bold;width:118px;text-align:center;">None</div>
<div style="left:480.2px;top:247.89999999999998px;width:5.6px;height:1.1px;background:#444;"></div>
<div style="left:485.2px;top:246.69999999999996px;width:0.7px;height:2.3px;background:#444;"></div>
<svg width="5" height="10" viewBox="0 0 5 10" style="left:490.8px;top:242.6px"><rect x="0.3" y="0.3" width="4.2" height="4.3" fill="#eee" stroke="#999" stroke-width="0.5"/><rect x="0.3" y="5.2" width="4.2" height="4.3" fill="#eee" stroke="#999" stroke-width="0.5"/><path d="M0.8 3.6 L2.4 1.2 L4 3.6 Z M0.8 6.2 L2.4 8.6 L4 6.2 Z" fill="#111"/></svg>
<div style="left:197.2px;top:253.0px;width:9.4px;height:9.4px;background:#fff;border:0.6px solid #4a4a4a;box-sizing:border-box;"><svg width="9.4" height="9.4" viewBox="0 0 9.4 9.4" style="left:-0.7px;top:-0.7px"><rect x="1.6" y="2" width="3.6" height="5" fill="#e8d020" stroke="#5a5210" stroke-width="0.5"/><rect x="2.6" y="3" width="1.4" height="2.8" fill="#fff6c0"/><path d="M5.8 2.4 Q7.8 4.4 5.8 7" stroke="#9a98c0" stroke-width="0.9" fill="none"/><rect x="6.6" y="6.8" width="1.4" height="1.2" fill="#222"/></svg></div>
<div style="left:208px;top:253.0px;width:131px;height:9.4px;background:#fff;border:0.6px solid #bdbdbd;box-sizing:border-box;border-right-color:#e8e8e8;border-bottom-color:#e8e8e8;"></div>
<div class="t" style="left:208px;top:254.39999999999998px;height:7px;line-height:7px;font-size:3.5px;color:#111;white-space:nowrap;font-weight:bold;width:118px;text-align:center;">clas...ons</div>
<div style="left:330.2px;top:258.09999999999997px;width:5.6px;height:1.1px;background:#444;"></div>
<div style="left:335.2px;top:256.9px;width:0.7px;height:2.3px;background:#444;"></div>
<svg width="5" height="10" viewBox="0 0 5 10" style="left:340.6px;top:252.8px"><rect x="0.3" y="0.3" width="4.2" height="4.3" fill="#eee" stroke="#999" stroke-width="0.5"/><rect x="0.3" y="5.2" width="4.2" height="4.3" fill="#eee" stroke="#999" stroke-width="0.5"/><path d="M0.8 3.6 L2.4 1.2 L4 3.6 Z M0.8 6.2 L2.4 8.6 L4 6.2 Z" fill="#111"/></svg>
<div style="left:346.6px;top:253.0px;width:9.4px;height:9.4px;background:#fffdf4;border:0.6px solid #4a4a4a;box-sizing:border-box;"><svg width="9.4" height="9.4" viewBox="0 0 9.4 9.4" style="left:-0.7px;top:-0.7px"><rect x="2.6" y="2.4" width="3.8" height="4" fill="#d8a030"/><rect x="3.4" y="3.2" width="2" height="2.2" fill="#6a4a14"/><rect x="6.4" y="6.6" width="1.6" height="1.4" fill="#222"/></svg></div>
<div style="left:358px;top:253.0px;width:131px;height:9.4px;background:#fff;border:0.6px solid #bdbdbd;box-sizing:border-box;border-right-color:#e8e8e8;border-bottom-color:#e8e8e8;"></div>
<div class="t" style="left:358px;top:254.39999999999998px;height:7px;line-height:7px;font-size:3.5px;color:#111;white-space:nowrap;font-weight:bold;width:118px;text-align:center;">FLAI...ted</div>
<div style="left:480.2px;top:258.09999999999997px;width:5.6px;height:1.1px;background:#444;"></div>
<div style="left:485.2px;top:256.9px;width:0.7px;height:2.3px;background:#444;"></div>
<svg width="5" height="10" viewBox="0 0 5 10" style="left:490.8px;top:252.8px"><rect x="0.3" y="0.3" width="4.2" height="4.3" fill="#eee" stroke="#999" stroke-width="0.5"/><rect x="0.3" y="5.2" width="4.2" height="4.3" fill="#eee" stroke="#999" stroke-width="0.5"/><path d="M0.8 3.6 L2.4 1.2 L4 3.6 Z M0.8 6.2 L2.4 8.6 L4 6.2 Z" fill="#111"/></svg>
<div style="left:197.2px;top:263.8px;width:10px;height:9px;background:#fff;border:0.6px solid #4a4a4a;box-sizing:border-box;"><svg width="9.4" height="9.4" viewBox="0 0 9.4 9.4" style="left:-0.7px;top:-0.7px"><ellipse cx="4.4" cy="5.2" rx="2.6" ry="1.7" stroke="#222" stroke-width="0.9" fill="none"/><ellipse cx="5.6" cy="3.8" rx="2.2" ry="1.5" stroke="#555" stroke-width="0.8" fill="#ccc"/></svg></div>
<div style="left:208.2px;top:263.8px;width:9.4px;height:9px;background:#fff;border:0.6px solid #999;box-sizing:border-box;"><svg width="9.4" height="9.4" viewBox="0 0 9.4 9.4" style="left:-0.7px;top:-0.7px"><path d="M2 4 Q4.6 7.6 7.4 4" stroke="#888" stroke-width="0.8" fill="#eee"/></svg></div>
<div style="left:219px;top:263.8px;width:9.4px;height:9px;background:#fff;border:0.6px solid #4a4a4a;box-sizing:border-box;"><svg width="9.4" height="9.4" viewBox="0 0 9.4 9.4" style="left:-0.7px;top:-0.7px"><rect x="1.2" y="1.2" width="7" height="7" fill="#555"/><rect x="3" y="2.4" width="3.4" height="4.6" fill="#999"/><path d="M4.7 1.2 V8.2 M1.2 4.7 H8.2" stroke="#222" stroke-width="0.5"/></svg></div>
<div style="left:230px;top:263.8px;width:9.4px;height:9px;background:#fff;border:0.6px solid #4a4a4a;box-sizing:border-box;"><svg width="9.4" height="9.4" viewBox="0 0 9.4 9.4" style="left:-0.7px;top:-0.7px"><rect x="1.2" y="1.2" width="7" height="7" fill="#4a6aa8"/><ellipse cx="4.7" cy="4.4" rx="2.4" ry="1.8" fill="#a8c4f0" stroke="#1c2c60" stroke-width="0.6"/><rect x="5.6" y="6.4" width="2" height="1.4" fill="#222"/></svg></div>
<div style="left:241px;top:263.8px;width:9.4px;height:9px;background:#fff;border:0.6px solid #4a4a4a;box-sizing:border-box;"><svg width="9.4" height="9.4" viewBox="0 0 9.4 9.4" style="left:-0.7px;top:-0.7px"><rect x="1" y="1" width="7.4" height="7.4" fill="#111"/><rect x="1.4" y="1.4" width="2" height="2.4" fill="#e03030"/><rect x="3.4" y="1.4" width="2" height="2.4" fill="#30c040"/><rect x="5.4" y="1.4" width="2.4" height="2.4" fill="#3050e0"/><rect x="1.4" y="3.8" width="2.4" height="2" fill="#e0d030"/><path d="M4 7.6 L7.8 4.4 V7.6 Z" fill="#eee"/></svg></div>
<div style="left:252px;top:263.8px;width:9.4px;height:9px;background:#fff;border:0.6px solid #555;box-sizing:border-box;"><svg width="9.4" height="9.4" viewBox="0 0 9.4 9.4" style="left:-0.7px;top:-0.7px"><rect x="1" y="1" width="7.4" height="7.4" fill="#8a8a8a"/><path d="M3.4 1 V8.4 M5.9 1 V8.4 M1 3.4 H8.4 M1 5.9 H8.4" stroke="#444" stroke-width="0.6"/></svg></div>
<div style="left:263px;top:264.6px;width:205.4px;height:8px;background:#a9a9a9;border:0.7px solid #6e6e6e;box-sizing:border-box;border-right-color:#d8d8d8;border-bottom-color:#d8d8d8;"></div>
<div style="left:337.8px;top:265.2px;width:14px;height:6.8px;background:#f2f2f2;border:0.6px solid #fff;box-sizing:border-box;border-right-color:#666;border-bottom-color:#666;"><div style="left:6.2px;top:0;width:0.7px;height:5.6px;background:#777"></div><div style="left:6.9px;top:0;width:0.6px;height:5.6px;background:#fff"></div></div>
<div style="left:470.6px;top:264.0px;width:25.4px;height:9.4px;background:#fff;border:0.8px solid #444;box-sizing:border-box;border-right-color:#ddd;border-bottom-color:#ddd;"></div>
<div class="t" style="left:472px;top:265.5px;height:7px;line-height:7px;font-size:5.1px;color:#111;white-space:nowrap;">-159.45</div>
<div style="left:197px;top:276.2px;width:299px;height:0px;background:#000;"></div>
<div style="left:197px;top:275.6px;width:299px;height:162.6px;background:#000;"></div>
<div style="left:498.6px;top:239.2px;width:299px;height:3.2px;background:#6ab23e;"></div>
<svg width="3" height="2" viewBox="0 0 3 2" style="left:646.6px;top:240.6px"><path d="M0 2 L1.5 0 L3 2Z" fill="#111"/></svg>
<div style="left:498.6px;top:242.39999999999998px;width:299px;height:33.8px;background:#fff;"></div>
<div style="left:498.8px;top:242.79999999999998px;width:9.4px;height:9.4px;background:#fff;border:0.6px solid #4a4a4a;box-sizing:border-box;"><svg width="9.4" height="9.4" viewBox="0 0 9.4 9.4" style="left:-0.7px;top:-0.7px"><path d="M2.6 2 V5.4 H5.8 V2 M4.2 2 V7.2 M6.6 2 V7.4" stroke="#222" stroke-width="0.9" fill="none"/></svg></div>
<div style="left:509.6px;top:242.79999999999998px;width:131px;height:9.4px;background:#fff;border:0.6px solid #bdbdbd;box-sizing:border-box;border-right-color:#e8e8e8;border-bottom-color:#e8e8e8;"></div>
<div class="t" style="left:509.6px;top:244.19999999999996px;height:7px;line-height:7px;font-size:3.5px;color:#111;white-space:nowrap;font-weight:bold;width:118px;text-align:center;">Coronal</div>
<div style="left:631.8000000000001px;top:247.89999999999998px;width:5.6px;height:1.1px;background:#444;"></div>
<div style="left:636.8000000000001px;top:246.69999999999996px;width:0.7px;height:2.3px;background:#444;"></div>
<svg width="5" height="10" viewBox="0 0 5 10" style="left:642.2px;top:242.6px"><rect x="0.3" y="0.3" width="4.2" height="4.3" fill="#eee" stroke="#999" stroke-width="0.5"/><rect x="0.3" y="5.2" width="4.2" height="4.3" fill="#eee" stroke="#999" stroke-width="0.5"/><path d="M0.8 3.6 L2.4 1.2 L4 3.6 Z M0.8 6.2 L2.4 8.6 L4 6.2 Z" fill="#111"/></svg>
<div style="left:648.2px;top:242.79999999999998px;width:9.4px;height:9.4px;background:#fffdf4;border:0.6px solid #4a4a4a;box-sizing:border-box;"><svg width="9.4" height="9.4" viewBox="0 0 9.4 9.4" style="left:-0.7px;top:-0.7px"><rect x="2.4" y="2" width="3.8" height="4" fill="#e0a830"/><rect x="3.4" y="2.8" width="1.8" height="2" fill="#7a5a18"/><rect x="6.4" y="6.6" width="1.6" height="1.4" fill="#222"/></svg></div>
<div style="left:659.6px;top:242.79999999999998px;width:131px;height:9.4px;background:#fff;border:0.6px solid #bdbdbd;box-sizing:border-box;border-right-color:#e8e8e8;border-bottom-color:#e8e8e8;"></div>
<div class="t" style="left:659.6px;top:244.19999999999996px;height:7px;line-height:7px;font-size:3.5px;color:#111;white-space:nowrap;font-weight:bold;width:118px;text-align:center;">None</div>
<div style="left:781.8000000000001px;top:247.89999999999998px;width:5.6px;height:1.1px;background:#444;"></div>
<div style="left:786.8000000000001px;top:246.69999999999996px;width:0.7px;height:2.3px;background:#444;"></div>
<svg width="5" height="10" viewBox="0 0 5 10" style="left:792.4000000000001px;top:242.6px"><rect x="0.3" y="0.3" width="4.2" height="4.3" fill="#eee" stroke="#999" stroke-width="0.5"/><rect x="0.3" y="5.2" width="4.2" height="4.3" fill="#eee" stroke="#999" stroke-width="0.5"/><path d="M0.8 3.6 L2.4 1.2 L4 3.6 Z M0.8 6.2 L2.4 8.6 L4 6.2 Z" fill="#111"/></svg>
<div style="left:498.8px;top:253.0px;width:9.4px;height:9.4px;background:#fff;border:0.6px solid #4a4a4a;box-sizing:border-box;"><svg width="9.4" height="9.4" viewBox="0 0 9.4 9.4" style="left:-0.7px;top:-0.7px"><rect x="1.6" y="2" width="3.6" height="5" fill="#e8d020" stroke="#5a5210" stroke-width="0.5"/><rect x="2.6" y="3" width="1.4" height="2.8" fill="#fff6c0"/><path d="M5.8 2.4 Q7.8 4.4 5.8 7" stroke="#9a98c0" stroke-width="0.9" fill="none"/><rect x="6.6" y="6.8" width="1.4" height="1.2" fill="#222"/></svg></div>
<div style="left:509.6px;top:253.0px;width:131px;height:9.4px;background:#fff;border:0.6px solid #bdbdbd;box-sizing:border-box;border-right-color:#e8e8e8;border-bottom-color:#e8e8e8;"></div>
<div class="t" style="left:509.6px;top:254.39999999999998px;height:7px;line-height:7px;font-size:3.5px;color:#111;white-space:nowrap;font-weight:bold;width:118px;text-align:center;">clas...ons</div>
<div style="left:631.8000000000001px;top:258.09999999999997px;width:5.6px;height:1.1px;background:#444;"></div>
<div style="left:636.8000000000001px;top:256.9px;width:0.7px;height:2.3px;background:#444;"></div>
<svg width="5" height="10" viewBox="0 0 5 10" style="left:642.2px;top:252.8px"><rect x="0.3" y="0.3" width="4.2" height="4.3" fill="#eee" stroke="#999" stroke-width="0.5"/><rect x="0.3" y="5.2" width="4.2" height="4.3" fill="#eee" stroke="#999" stroke-width="0.5"/><path d="M0.8 3.6 L2.4 1.2 L4 3.6 Z M0.8 6.2 L2.4 8.6 L4 6.2 Z" fill="#111"/></svg>
<div style="left:648.2px;top:253.0px;width:9.4px;height:9.4px;background:#fffdf4;border:0.6px solid #4a4a4a;box-sizing:border-box;"><svg width="9.4" height="9.4" viewBox="0 0 9.4 9.4" style="left:-0.7px;top:-0.7px"><rect x="2.6" y="2.4" width="3.8" height="4" fill="#d8a030"/><rect x="3.4" y="3.2" width="2" height="2.2" fill="#6a4a14"/><rect x="6.4" y="6.6" width="1.6" height="1.4" fill="#222"/></svg></div>
<div style="left:659.6px;top:253.0px;width:131px;height:9.4px;background:#fff;border:0.6px solid #bdbdbd;box-sizing:border-box;border-right-color:#e8e8e8;border-bottom-color:#e8e8e8;"></div>
<div class="t" style="left:659.6px;top:254.39999999999998px;height:7px;line-height:7px;font-size:3.5px;color:#111;white-space:nowrap;font-weight:bold;width:118px;text-align:center;">FLAI...ted</div>
<div style="left:781.8000000000001px;top:258.09999999999997px;width:5.6px;height:1.1px;background:#444;"></div>
<div style="left:786.8000000000001px;top:256.9px;width:0.7px;height:2.3px;background:#444;"></div>
<svg width="5" height="10" viewBox="0 0 5 10" style="left:792.4000000000001px;top:252.8px"><rect x="0.3" y="0.3" width="4.2" height="4.3" fill="#eee" stroke="#999" stroke-width="0.5"/><rect x="0.3" y="5.2" width="4.2" height="4.3" fill="#eee" stroke="#999" stroke-width="0.5"/><path d="M0.8 3.6 L2.4 1.2 L4 3.6 Z M0.8 6.2 L2.4 8.6 L4 6.2 Z" fill="#111"/></svg>
<div style="left:498.8px;top:263.8px;width:10px;height:9px;background:#fff;border:0.6px solid #4a4a4a;box-sizing:border-box;"><svg width="9.4" height="9.4" viewBox="0 0 9.4 9.4" style="left:-0.7px;top:-0.7px"><ellipse cx="4.4" cy="5.2" rx="2.6" ry="1.7" stroke="#222" stroke-width="0.9" fill="none"/><ellipse cx="5.6" cy="3.8" rx="2.2" ry="1.5" stroke="#555" stroke-width="0.8" fill="#ccc"/></svg></div>
<div style="left:509.8px;top:263.8px;width:9.4px;height:9px;background:#fff;border:0.6px solid #999;box-sizing:border-box;"><svg width="9.4" height="9.4" viewBox="0 0 9.4 9.4" style="left:-0.7px;top:-0.7px"><path d="M2 4 Q4.6 7.6 7.4 4" stroke="#888" stroke-width="0.8" fill="#eee"/></svg></div>
<div style="left:520.6px;top:263.8px;width:9.4px;height:9px;background:#fff;border:0.6px solid #4a4a4a;box-sizing:border-box;"><svg width="9.4" height="9.4" viewBox="0 0 9.4 9.4" style="left:-0.7px;top:-0.7px"><rect x="1.2" y="1.2" width="7" height="7" fill="#555"/><rect x="3" y="2.4" width="3.4" height="4.6" fill="#999"/><path d="M4.7 1.2 V8.2 M1.2 4.7 H8.2" stroke="#222" stroke-width="0.5"/></svg></div>
<div style="left:531.6px;top:263.8px;width:9.4px;height:9px;background:#fff;border:0.6px solid #4a4a4a;box-sizing:border-box;"><svg width="9.4" height="9.4" viewBox="0 0 9.4 9.4" style="left:-0.7px;top:-0.7px"><rect x="1.2" y="1.2" width="7" height="7" fill="#4a6aa8"/><ellipse cx="4.7" cy="4.4" rx="2.4" ry="1.8" fill="#a8c4f0" stroke="#1c2c60" stroke-width="0.6"/><rect x="5.6" y="6.4" width="2" height="1.4" fill="#222"/></svg></div>
<div style="left:542.6px;top:263.8px;width:9.4px;height:9px;background:#fff;border:0.6px solid #4a4a4a;box-sizing:border-box;"><svg width="9.4" height="9.4" viewBox="0 0 9.4 9.4" style="left:-0.7px;top:-0.7px"><rect x="1" y="1" width="7.4" height="7.4" fill="#111"/><rect x="1.4" y="1.4" width="2" height="2.4" fill="#e03030"/><rect x="3.4" y="1.4" width="2" height="2.4" fill="#30c040"/><rect x="5.4" y="1.4" width="2.4" height="2.4" fill="#3050e0"/><rect x="1.4" y="3.8" width="2.4" height="2" fill="#e0d030"/><path d="M4 7.6 L7.8 4.4 V7.6 Z" fill="#eee"/></svg></div>
<div style="left:553.6px;top:263.8px;width:9.4px;height:9px;background:#fff;border:0.6px solid #555;box-sizing:border-box;"><svg width="9.4" height="9.4" viewBox="0 0 9.4 9.4" style="left:-0.7px;top:-0.7px"><rect x="1" y="1" width="7.4" height="7.4" fill="#8a8a8a"/><path d="M3.4 1 V8.4 M5.9 1 V8.4 M1 3.4 H8.4 M1 5.9 H8.4" stroke="#444" stroke-width="0.6"/></svg></div>
<div style="left:564.6px;top:264.6px;width:205.4px;height:8px;background:#a9a9a9;border:0.7px solid #6e6e6e;box-sizing:border-box;border-right-color:#d8d8d8;border-bottom-color:#d8d8d8;"></div>
<div style="left:643px;top:265.2px;width:14px;height:6.8px;background:#f2f2f2;border:0.6px solid #fff;box-sizing:border-box;border-right-color:#666;border-bottom-color:#666;"><div style="left:6.2px;top:0;width:0.7px;height:5.6px;background:#777"></div><div style="left:6.9px;top:0;width:0.6px;height:5.6px;background:#fff"></div></div>
<div style="left:772.2px;top:264.0px;width:25.4px;height:9.4px;background:#fff;border:0.8px solid #444;box-sizing:border-box;border-right-color:#ddd;border-bottom-color:#ddd;"></div>
<div class="t" style="left:773.6px;top:265.5px;height:7px;line-height:7px;font-size:5.1px;color:#111;white-space:nowrap;">-154.38</div>
<div style="left:498.6px;top:276.2px;width:299px;height:0px;background:#000;"></div>
<div style="left:498.6px;top:275.6px;width:298.6px;height:162.8px;background:#000;"></div>
<div style="left:0px;top:443px;width:800px;height:0.9px;background:#b0b0b0;"></div>
<svg width="298.6" height="162.4" viewBox="498.6 276 298.6 162.4" style="left:498.6px;top:276px;background:#000"><defs><filter id="axb" x="-10%" y="-10%" width="120%" height="120%"><feGaussianBlur stdDeviation="0.55"/></filter><filter id="axb2" x="-10%" y="-10%" width="120%" height="120%"><feGaussianBlur stdDeviation="1.1"/></filter><clipPath id="axclip"><ellipse cx="649.5" cy="360.8" rx="52.4" ry="65.8"/></clipPath><clipPath id="axbot"><path d="M560 437.6 L600 437.6 L640 400 L662 400 L706 437.6 Z"/></clipPath><clipPath id="axbot2"><path d="M580 437.6 L580 392 L649 392 L718 392 L718 437.6 Z"/></clipPath></defs><g filter="url(#axb)"><ellipse cx="649.5" cy="360.2" rx="59" ry="75.4" fill="#f6f6f6"/><ellipse cx="649.5" cy="358.4" rx="57" ry="71.8" fill="#8a8a8a"/><ellipse cx="649.5" cy="358.6" rx="56.2" ry="70.6" fill="#3c3c3c"/><ellipse cx="649.5" cy="359.2" rx="55.2" ry="69.6" fill="none" stroke="#5c5c5c" stroke-width="1"/><ellipse cx="649.5" cy="360.4" rx="53.6" ry="67.2" fill="#1e1e1e"/></g><g filter="url(#axb)"><path d="M700.6 358.5 Q700.5 360.8 700.8 363.1 Q701.1 365.3 700.7 367.6 Q700.3 369.8 700.3 372.1 Q700.2 374.4 699.8 376.6 Q699.4 378.8 698.2 380.8 Q697.0 382.7 696.3 384.8 Q695.5 386.8 695.7 389.2 Q695.8 391.6 694.3 393.3 Q692.7 395.0 691.7 396.8 Q690.7 398.7 690.4 401.0 Q690.0 403.2 688.3 404.6 Q686.6 405.9 685.6 407.8 Q684.6 409.6 682.9 410.8 Q681.2 412.0 679.9 413.5 Q678.6 414.9 676.7 415.7 Q674.8 416.4 673.5 418.0 Q672.3 419.5 670.8 420.7 Q669.2 421.9 667.3 422.3 Q665.5 422.7 663.8 423.5 Q662.2 424.4 660.4 424.8 Q658.5 425.2 656.7 424.8 Q654.8 424.4 653.0 425.4 Q651.3 426.4 649.5 426.2 Q647.7 426.0 645.9 425.5 Q644.2 425.0 642.5 424.3 Q640.8 423.7 638.8 424.2 Q636.8 424.7 635.2 423.6 Q633.6 422.6 631.8 422.0 Q629.9 421.5 628.2 420.8 Q626.4 420.0 624.9 418.8 Q623.4 417.5 621.7 416.5 Q620.0 415.5 618.9 413.6 Q617.9 411.8 616.2 410.7 Q614.4 409.6 613.5 407.7 Q612.5 405.9 610.8 404.5 Q609.1 403.2 608.0 401.3 Q607.0 399.5 606.8 397.1 Q606.6 394.8 605.7 392.9 Q604.7 391.0 603.9 389.0 Q603.0 387.0 601.5 385.2 Q599.9 383.3 600.0 381.0 Q600.0 378.7 599.4 376.5 Q598.7 374.4 598.8 372.1 Q598.9 369.8 598.4 367.6 Q598.0 365.3 598.1 363.1 Q598.2 360.8 598.3 358.5 Q598.5 356.3 598.5 354.0 Q598.5 351.7 598.9 349.5 Q599.3 347.3 599.5 345.0 Q599.7 342.7 600.6 340.6 Q601.6 338.4 602.1 336.2 Q602.6 334.0 603.6 332.0 Q604.6 330.0 605.5 327.9 Q606.4 325.8 607.8 324.1 Q609.3 322.4 611.0 320.9 Q612.7 319.5 613.3 317.3 Q613.8 315.1 615.1 313.4 Q616.3 311.8 617.8 310.3 Q619.3 308.9 621.0 307.8 Q622.7 306.8 624.1 305.4 Q625.5 304.1 627.3 303.5 Q629.2 303.0 630.4 301.4 Q631.5 299.8 633.3 299.3 Q635.0 298.8 636.7 298.5 Q638.4 298.2 640.0 298.0 Q641.6 297.8 643.1 296.6 Q644.5 295.3 646.2 295.0 Q647.8 294.7 649.5 295.7 Q651.1 296.8 652.8 296.1 Q654.5 295.4 656.0 296.2 Q657.5 297.0 659.0 297.8 Q660.5 298.5 662.2 299.0 Q663.8 299.4 665.6 299.7 Q667.4 300.0 669.0 300.8 Q670.7 301.6 671.6 303.5 Q672.6 305.4 674.5 306.0 Q676.4 306.7 677.3 308.5 Q678.3 310.4 680.2 311.3 Q682.2 312.1 683.2 314.0 Q684.1 315.9 685.9 317.2 Q687.8 318.5 689.1 320.3 Q690.4 322.0 691.0 324.2 Q691.6 326.3 693.1 328.1 Q694.7 329.8 694.8 332.2 Q695.0 334.5 695.5 336.7 Q696.0 338.9 697.3 340.8 Q698.6 342.8 698.5 345.2 Q698.4 347.5 699.0 349.7 Q699.6 351.8 700.1 354.1 Q700.7 356.3 700.6 358.5 Z" fill="#3273c9"/><path d="M700.4 358.5 Q700.2 360.8 700.3 363.0 Q700.4 365.3 700.2 367.5 Q700.1 369.8 700.0 372.0 Q699.8 374.2 699.2 376.4 Q698.5 378.5 698.2 380.7 Q697.8 382.9 696.2 384.6 Q694.5 386.4 694.2 388.5 Q693.9 390.7 693.6 392.9 Q693.2 395.1 691.9 396.8 Q690.6 398.5 689.7 400.4 Q688.9 402.3 687.0 403.4 Q685.0 404.6 684.1 406.4 Q683.2 408.2 681.6 409.4 Q680.1 410.6 678.9 412.2 Q677.8 413.8 676.3 415.0 Q674.8 416.2 672.9 416.7 Q671.0 417.1 669.5 418.2 Q668.1 419.3 666.5 420.2 Q664.9 421.0 663.4 422.3 Q662.0 423.7 660.2 424.0 Q658.4 424.3 656.5 423.8 Q654.7 423.4 653.0 424.4 Q651.3 425.3 649.5 424.5 Q647.8 423.7 646.0 424.1 Q644.2 424.5 642.6 423.6 Q640.9 422.8 639.3 422.2 Q637.7 421.6 635.6 421.9 Q633.6 422.3 632.3 420.8 Q630.9 419.3 629.4 418.4 Q627.8 417.6 625.7 417.3 Q623.6 417.0 622.2 415.7 Q620.7 414.4 619.8 412.5 Q618.8 410.7 616.9 409.8 Q614.9 408.9 614.1 407.1 Q613.2 405.2 611.9 403.6 Q610.5 402.0 609.9 400.0 Q609.3 397.9 607.6 396.5 Q605.8 395.1 605.2 393.0 Q604.6 390.9 603.5 389.0 Q602.4 387.1 601.8 385.0 Q601.2 382.9 601.4 380.6 Q601.5 378.3 601.0 376.1 Q600.5 374.0 600.5 371.8 Q600.4 369.6 600.2 367.4 Q600.1 365.2 600.1 363.0 Q600.1 360.8 600.0 358.6 Q599.8 356.4 599.7 354.1 Q599.6 351.9 600.7 349.8 Q601.8 347.7 601.6 345.4 Q601.3 343.1 602.4 341.1 Q603.5 339.1 604.3 337.0 Q605.1 335.0 605.4 332.8 Q605.7 330.6 607.1 328.8 Q608.4 327.0 609.7 325.3 Q610.9 323.5 611.9 321.7 Q612.9 319.8 613.9 318.0 Q615.0 316.2 616.8 315.1 Q618.7 314.1 619.3 311.9 Q619.8 309.7 622.0 309.2 Q624.2 308.8 625.1 306.9 Q626.0 305.1 627.4 303.9 Q628.9 302.8 630.8 302.7 Q632.8 302.7 634.0 301.1 Q635.1 299.5 636.8 299.3 Q638.6 299.2 640.1 298.5 Q641.6 297.8 643.2 298.2 Q644.9 298.5 646.4 298.3 Q648.0 298.1 649.5 298.0 Q651.0 297.8 652.7 297.0 Q654.4 296.3 655.8 297.5 Q657.2 298.7 659.0 298.5 Q660.7 298.3 662.4 298.7 Q664.0 299.2 665.6 299.9 Q667.2 300.7 668.3 302.2 Q669.5 303.8 671.0 304.8 Q672.5 305.8 674.0 306.8 Q675.6 307.9 677.2 309.0 Q678.8 310.1 679.6 312.0 Q680.4 314.0 682.2 315.1 Q684.1 316.1 685.4 317.8 Q686.7 319.4 687.9 321.1 Q689.2 322.9 689.4 325.2 Q689.6 327.5 691.6 329.0 Q693.6 330.4 693.5 332.8 Q693.4 335.2 694.5 337.1 Q695.5 339.1 696.5 341.1 Q697.5 343.2 698.4 345.3 Q699.3 347.4 699.0 349.7 Q698.8 352.0 699.7 354.1 Q700.7 356.3 700.4 358.5 Z" fill="#fbc8a9"/><g fill="none" stroke="#3273c9" stroke-linecap="round" stroke-linejoin="round" clip-path="url(#axclip)"><path d="M700.0 362.2 L697.7 363.0 L695.6 361.6 L693.4 361.8 L691.1 362.3" stroke-width="2.9"/><path d="M693.4 361.8 L691.4 360.4 L691.0 358.1" stroke-width="2.1"/><path d="M699.2 372.2 L697.0 372.4 L695.0 374.1 L692.8 374.0 L690.5 373.5 L688.5 375.0 L686.2 374.6" stroke-width="3.0"/><path d="M686.2 374.6 L684.7 376.3 L683.9 378.4" stroke-width="1.7"/><path d="M698.1 378.3 L695.9 377.8 L693.7 378.5 L691.5 378.7" stroke-width="3.1"/><path d="M691.5 378.7 L689.4 377.7 L688.2 375.8 L687.0 373.9" stroke-width="1.5"/><path d="M695.2 388.1 L693.0 387.9 L690.7 388.7 L688.6 388.1 L686.5 386.5 L684.2 387.7 L682.1 386.1" stroke-width="2.1"/><path d="M686.5 386.5 L685.7 384.3 L683.3 383.3" stroke-width="1.3"/><path d="M692.2 395.1 L690.1 394.1 L687.7 394.8 L685.7 393.8 L683.5 393.2 L681.3 393.5 L679.2 392.4 L677.1 391.6" stroke-width="2.6"/><path d="M687.9 402.4 L685.7 401.8 L683.9 400.4 L682.7 398.2 L680.4 397.7 L679.3 395.4 L676.9 395.1" stroke-width="2.3"/><path d="M680.4 397.7 L678.9 399.3 L676.9 400.3 L675.1 401.7" stroke-width="2.1"/><path d="M681.5 410.3 L679.2 409.8 L677.4 408.7 L675.8 407.0 L674.1 405.6" stroke-width="2.5"/><path d="M675.8 407.0 L674.3 408.7 L671.6 408.6" stroke-width="2.2"/><path d="M676.7 414.7 L676.0 412.4 L674.8 410.6 L672.8 409.4 L671.1 407.9 L669.4 406.5 L667.9 404.9 L666.6 403.1" stroke-width="2.7"/><path d="M672.8 409.4 L672.1 407.1 L673.2 405.0 L673.2 402.8" stroke-width="2.1"/><path d="M670.8 418.8 L669.1 417.4 L668.1 415.3 L667.3 413.1" stroke-width="3.1"/><path d="M668.1 415.3 L666.2 416.3 L664.6 418.0" stroke-width="1.3"/><path d="M665.3 421.6 L664.1 419.6 L663.3 417.5 L665.4 414.9 L663.9 412.9" stroke-width="2.3"/><path d="M663.3 417.5 L661.0 417.1 L659.9 414.6 L657.7 414.1" stroke-width="2.1"/><path d="M658.6 423.8 L658.1 421.6 L658.1 419.4 L657.6 417.2 L657.6 415.0" stroke-width="3.4"/><path d="M658.1 419.4 L655.9 418.8 L653.7 418.7" stroke-width="1.2"/><path d="M652.9 424.7 L652.8 422.4 L652.9 420.1 L651.1 418.3 L651.8 415.9" stroke-width="3.8"/><path d="M644.8 424.5 L643.9 422.4 L643.7 420.2 L644.6 417.9 L645.2 415.7" stroke-width="3.5"/><path d="M645.2 415.7 L646.7 413.9 L648.8 413.1 L651.0 412.5" stroke-width="1.4"/><path d="M636.2 422.6 L636.2 420.1 L639.1 419.0 L639.5 416.8 L639.8 414.5 L641.4 412.8" stroke-width="2.2"/><path d="M639.5 416.8 L641.7 416.9 L643.9 416.6" stroke-width="1.8"/><path d="M631.1 420.4 L631.7 418.3 L630.8 415.8 L633.3 414.1 L633.6 411.9 L632.5 409.4 L634.6 407.6 L633.5 405.1 L636.1 403.5" stroke-width="2.4"/><path d="M626.2 417.6 L628.0 416.1 L628.2 413.6 L629.9 412.1 L631.8 410.7" stroke-width="2.1"/><path d="M617.9 410.7 L619.8 409.6 L622.1 409.1 L624.0 408.1 L624.9 405.3 L626.8 404.1 L629.1 403.8 L631.5 403.4" stroke-width="3.4"/><path d="M613.1 405.2 L614.7 403.7 L615.1 401.1 L616.3 399.3 L619.0 398.6" stroke-width="3.0"/><path d="M615.1 401.1 L614.0 399.0 L614.0 396.8" stroke-width="1.7"/><path d="M610.3 401.1 L611.3 399.1 L614.0 398.5 L614.7 396.2 L615.3 393.8 L616.9 392.3 L618.7 391.0 L620.8 389.8 L621.6 387.6" stroke-width="2.4"/><path d="M615.3 393.8 L614.1 392.0 L612.9 390.2" stroke-width="1.6"/><path d="M605.8 392.9 L607.4 391.2 L609.5 390.4 L611.2 389.0 L613.9 389.5 L616.1 388.8 L617.7 387.1 L619.3 385.5" stroke-width="2.5"/><path d="M616.1 388.8 L617.6 390.4 L618.5 392.6" stroke-width="2.0"/><path d="M603.0 385.6 L604.9 384.6 L606.9 383.6 L609.1 383.2 L611.5 383.5 L613.1 381.1" stroke-width="3.0"/><path d="M606.9 383.6 L608.0 385.7 L610.8 385.8" stroke-width="2.1"/><path d="M600.7 377.1 L602.3 375.5 L605.0 375.9 L606.1 373.2 L608.7 373.5 L610.7 372.6 L612.7 371.6 L614.4 370.2 L616.7 369.7" stroke-width="2.7"/><path d="M612.7 371.6 L611.7 369.5 L612.9 367.2" stroke-width="1.6"/><path d="M599.4 369.2 L601.6 370.0 L603.8 368.1 L606.0 370.1 L608.2 368.0 L610.4 370.0 L612.6 368.9 L614.8 368.6 L617.0 369.2" stroke-width="3.7"/><path d="M606.0 370.1 L606.2 372.4 L608.4 373.8 L609.5 375.7" stroke-width="2.1"/><path d="M599.1 358.1 L601.2 357.5 L603.5 357.7 L605.5 356.3 L607.9 357.3 L610.1 357.4 L611.9 354.6" stroke-width="2.0"/><path d="M605.5 356.3 L606.9 354.6 L608.1 352.7" stroke-width="1.9"/><path d="M600.1 349.7 L602.3 350.3 L604.4 351.0 L606.3 352.1 L608.3 353.0 L609.5 355.6 L611.6 356.2 L614.3 355.8 L615.3 358.8" stroke-width="3.8"/><path d="M601.6 343.5 L603.6 344.3 L606.0 344.5 L607.2 346.9 L609.5 347.3 L611.3 348.6 L612.7 350.7" stroke-width="3.1"/><path d="M604.4 335.1 L606.8 334.2 L608.8 335.5 L611.0 335.8 L612.9 337.9" stroke-width="2.6"/><path d="M611.0 335.8 L612.9 337.2 L613.8 339.2" stroke-width="1.9"/><path d="M608.5 326.6 L610.5 327.8 L613.0 326.5 L614.9 328.0 L617.2 327.9 L619.4 328.0 L621.4 329.3 L623.8 328.3" stroke-width="3.7"/><path d="M612.7 319.9 L614.0 321.6 L615.3 323.5 L616.9 324.9 L618.9 326.1 L620.9 327.2 L621.8 329.4 L624.3 330.1 L624.6 332.9" stroke-width="3.3"/><path d="M620.9 327.2 L622.9 326.4 L624.9 325.5" stroke-width="2.0"/><path d="M619.3 311.7 L620.1 314.0 L622.0 315.2 L623.4 316.8 L625.8 317.6 L627.7 318.9 L629.0 320.7 L630.1 322.7 L632.1 323.8" stroke-width="3.5"/><path d="M630.1 322.7 L630.0 324.9 L629.0 326.9" stroke-width="1.3"/><path d="M625.1 306.3 L626.9 307.6 L628.3 309.4 L630.5 310.1 L631.8 312.1 L633.5 313.4 L636.3 313.4 L637.3 315.8 L639.8 316.0" stroke-width="3.2"/><path d="M639.8 316.0 L639.2 318.2 L639.4 320.4 L639.3 322.6" stroke-width="1.3"/><path d="M628.6 303.7 L630.0 305.5 L630.2 307.8 L632.4 309.3 L633.1 311.3" stroke-width="2.5"/><path d="M636.2 299.5 L637.3 301.5 L638.5 303.3 L639.5 305.3 L641.4 306.7 L640.7 309.6 L643.4 310.7 L642.7 313.6" stroke-width="3.7"/><path d="M640.7 309.6 L638.8 311.1 L638.9 313.6 L636.9 315.1 L635.8 317.0" stroke-width="1.3"/><path d="M640.5 298.1 L641.7 299.9 L642.0 302.2 L642.9 304.2 L644.6 305.9 L645.9 307.7 L646.2 310.0 L646.7 312.1" stroke-width="3.6"/><path d="M642.9 304.2 L642.0 306.3 L641.1 308.3" stroke-width="1.5"/><path d="M647.4 296.9 L647.7 299.1 L648.3 301.3 L650.9 302.5 L649.9 305.4 L651.2 307.2 L651.7 309.4 L654.0 310.8 L654.7 312.9" stroke-width="2.7"/><path d="M654.4 297.2 L654.8 299.4 L655.2 301.7 L654.9 303.8 L652.8 305.9 L654.0 308.2" stroke-width="3.7"/><path d="M652.8 305.9 L650.7 306.6 L649.2 308.5 L647.9 310.3" stroke-width="2.0"/><path d="M660.0 298.5 L660.0 300.8 L659.6 303.0 L656.8 304.4 L657.4 306.9 L656.2 308.8 L656.6 311.3 L654.1 312.8 L654.4 315.2" stroke-width="3.6"/><path d="M656.8 304.4 L654.6 304.7 L652.3 304.9" stroke-width="1.5"/><path d="M666.8 301.5 L666.0 303.6 L665.4 305.8 L664.3 307.7 L663.1 309.5" stroke-width="3.6"/><path d="M665.4 305.8 L663.3 306.3 L661.0 306.4 L659.0 307.3" stroke-width="1.4"/><path d="M672.4 305.1 L670.6 306.6 L670.8 309.3 L670.1 311.5 L667.1 312.2 L667.1 314.8" stroke-width="3.3"/><path d="M667.1 312.2 L664.7 312.0 L663.1 314.3" stroke-width="1.7"/><path d="M678.2 310.1 L677.5 312.3 L676.3 314.2 L674.8 315.8 L673.5 317.6 L671.2 318.7 L670.2 320.7 L669.0 322.5 L669.7 325.6" stroke-width="2.1"/><path d="M684.1 316.8 L682.9 319.1 L680.5 319.4 L677.9 319.5 L676.2 320.9 L674.4 322.0" stroke-width="3.8"/><path d="M680.5 319.4 L678.2 319.7 L676.4 317.9 L674.2 317.7 L672.1 316.9" stroke-width="2.1"/><path d="M686.9 320.7 L686.3 323.0 L684.1 324.1 L683.8 326.7 L681.1 327.3 L679.2 328.7 L678.6 331.0 L677.4 332.9" stroke-width="2.8"/><path d="M691.2 327.9 L689.2 329.0 L686.9 329.1 L684.6 328.0 L682.7 330.4" stroke-width="3.0"/><path d="M695.1 336.4 L693.0 337.3 L690.7 336.7 L688.5 336.8 L686.4 338.3 L684.1 337.5" stroke-width="3.2"/><path d="M688.5 336.8 L687.0 335.2 L686.5 332.9" stroke-width="2.1"/><path d="M697.7 344.5 L695.7 345.4 L693.4 345.4 L691.7 347.3" stroke-width="3.4"/><path d="M699.6 354.3 L697.3 354.2 L695.5 352.4 L693.0 353.3 L690.9 352.8" stroke-width="3.4"/><path d="M690.9 352.8 L689.6 351.0 L689.0 348.8" stroke-width="2.1"/><path d="M650.5 295.2 L651.8 297.4 L651.0 299.6 L651.7 301.8 L649.1 304.1 L652.1 306.2 L652.5 308.4 L652.5 310.6 L651.4 312.8 L649.7 315.0 L649.8 317.2 L650.4 319.4 L649.5 321.7 L649.8 323.8 L652.0 326.0 L652.6 328.2 L650.0 330.4" stroke-width="2.6"/><path d="M651.7 301.8 L653.7 302.7 L656.0 302.8" stroke-width="2"/><path d="M651.7 301.8 L650.1 303.4 L648.3 304.7" stroke-width="2"/><path d="M652.5 308.4 L653.9 310.3 L656.7 309.9" stroke-width="2"/><path d="M652.5 308.4 L650.4 309.0 L648.1 308.5" stroke-width="2"/><path d="M649.7 315.0 L652.0 314.7 L653.9 316.1" stroke-width="2"/><path d="M649.7 315.0 L648.0 316.6 L645.9 317.3 L643.5 317.4 L642.3 320.0" stroke-width="2"/><path d="M649.5 321.7 L651.2 323.1 L653.8 322.8 L655.8 323.8 L657.8 324.8" stroke-width="2"/><path d="M649.5 321.7 L647.2 321.6 L645.0 321.8" stroke-width="2"/><path d="M612 318 q6 -4 10 0 q3 6 -2 10 q-6 3 -10 -2 q-2 -4 2 -8Z" fill="#3273c9" stroke="none"/><path d="M649.0 426.2 L648.7 424.0 L648.5 421.8 L649.9 419.6 L649.2 417.4 L648.5 415.2 L649.4 413.0 L648.6 410.8 L648.6 408.6 L648.0 406.4 L649.5 404.2 L649.8 402.0 L649.3 399.8 L649.9 397.6 L648.0 395.4 L648.5 393.2 L649.0 391.0 L649.9 388.8 L649.9 386.6 L648.8 384.4 L648.5 382.2 L648.9 380.0 L649.0 377.8 L649.9 375.6 L648.4 373.4 L649.6 371.2 L649.5 369.0" stroke-width="2.8"/><path d="M649.0 404.2 L647.6 402.4 L645.8 401.2 L643.8 400.1 L641.8 399.2 L640.0 397.9 L638.3 396.5" stroke-width="2.2"/><path d="M649.0 404.2 L651.1 403.4 L652.2 401.1 L654.1 400.0 L656.5 399.6 L657.8 397.6 L659.5 396.1" stroke-width="2.2"/><path d="M649.0 404.2 L647.5 406.1 L645.2 406.4 L643.5 407.9 L641.0 408.0 L639.2 409.3" stroke-width="2.2"/><path d="M649.0 404.2 L650.5 406.0 L653.1 405.9 L655.2 406.7 L657.1 407.8 L658.7 409.5" stroke-width="2.2"/><path d="M649.0 404.2 L648.4 402.0 L647.1 400.2 L645.8 398.4 L645.2 396.3" stroke-width="2.2"/><path d="M649.0 404.2 L650.2 402.3 L651.3 400.4 L652.4 398.5 L653.5 396.6" stroke-width="2.2"/><path d="M649.0 404.2 L647.5 405.8 L647.0 408.2 L644.6 409.2 L644.1 411.5 L642.4 413.0 L641.4 415.0 L639.6 416.4" stroke-width="2.2"/><path d="M649.0 404.2 L650.8 405.6 L652.1 407.4 L653.5 409.1 L655.0 410.7 L655.3 413.2 L657.1 414.6 L658.8 416.1" stroke-width="2.2"/><path d="M674 386 l5 1 l3 4 l-2 5 l3 5 l-4 1 l-4 -6 l1 -5Z" fill="#3273c9" stroke="none"/></g><path d="M636 338 q-2.8 8 0.4 17.4 q1.8 6.4 6.4 11 q1.4 -6.4 -1 -12.6 q-2.2 -8.4 -5.8 -15.8Z" fill="#0c1830" stroke="#e8eef8" stroke-width="0.9"/><path d="M661 345 q2.8 6 0.6 12.6 q-1.8 5.4 -6.4 10.6 q-1 -5.4 1.2 -11.2 q2 -6.4 4.6 -12Z" fill="#0c1830" stroke="#e8eef8" stroke-width="0.9"/><path d="M646.6 362 h5.6 l-0.6 7 l-1.4 5 h-1.6 l-1.2 -5Z" fill="#2f65b0"/><circle cx="632.4" cy="382.9" r="2.2" fill="#fff"/><circle cx="628.8" cy="389.4" r="2.2" fill="#fff"/><circle cx="665.0" cy="384.8" r="2.2" fill="#fff"/><circle cx="610.0" cy="334.0" r="0.9" fill="#fff"/><circle cx="676.0" cy="352.0" r="0.8" fill="#fff"/></g></svg>
<svg width="299" height="161.4" viewBox="197 76 299 161.4" style="left:197px;top:76px;background:#000"><defs><filter id="cb" x="-10%" y="-10%" width="120%" height="120%"><feGaussianBlur stdDeviation="0.6"/></filter><filter id="cb2" x="-20%" y="-20%" width="140%" height="140%"><feGaussianBlur stdDeviation="1.3"/></filter><clipPath id="chead"><path d="M305 107.4 L383.4 107.4 Q387.4 122 387.4 140 Q386.6 165 379 182 Q367 200.6 347 200.6 Q326 200.6 313 182 Q305.6 166 305 142 Z"/></clipPath><linearGradient id="cg1" x1="0" y1="0" x2="0" y2="1"><stop offset="0" stop-color="#3c3c3c"/><stop offset="0.45" stop-color="#3a3a3a"/><stop offset="1" stop-color="#2c2c2c"/></linearGradient></defs><g clip-path="url(#chead)"><g filter="url(#cb)"><path d="M305 107.4 L383.4 107.4 Q387.4 122 387.4 140 Q386.6 165 379 182 Q367 200.6 347 200.6 Q326 200.6 313 182 Q305.6 166 305 142 Z" fill="#f2f2f2"/><path d="M311.6 108 L378 108 Q382 125 383.4 142 Q384.2 164 377.6 181 Q366 196 347 196.2 Q327 196 314.4 181 Q308 164 309.2 142 Z" fill="#5c5c5c"/><path d="M312.6 108 L377 108 Q381 125 381.8 142 Q382 164 375.4 179.2 Q364.4 193 347 193.2 Q328.6 193 316.6 179.2 Q310.2 164 310.8 142 Z" fill="url(#cg1)"/></g><g filter="url(#cb2)"><rect x="306" y="106" width="18" height="7" fill="#ececec"/><rect x="323" y="106" width="42" height="6.4" fill="#8c8c8c"/><rect x="364" y="105" width="22" height="8" fill="#ececec"/><path d="M335 110 L347 110 L348 147 L337 148 Z" fill="#8e8e8e"/><path d="M346 112 L354 112 L354 144 L347 146 Z" fill="#4a4a4a"/><path d="M339 114 L342.6 114 L343 146 L340 146 Z" fill="#b0b0b0"/><path d="M349.6 118 L352 118 L351.6 140 L349.6 140 Z" fill="#9a9a9a"/><path d="M313.6 130 L322 128 L324.6 146 L319 168 L312 164 Z" fill="#747474"/><path d="M368 129 L378.6 131 L381 164 L374 170 L367 148 Z" fill="#707070"/></g><g filter="url(#cb)"><path d="M312.4 109 L319 109 Q324.6 112 325.4 124 L326 137 L323 137 L322.4 124 Q321.6 113.6 316 112.6 L312.4 113 Z" fill="#e6e6e6"/><path d="M364 108 L371 108.6 Q376.6 114 377 126 L373 135 L369.6 134 L373.4 125 Q372.6 115 367 112 L364 112 Z" fill="#e6e6e6"/><path d="M313 110 L316 110 L315 126 L313.4 140 L312.4 140 Z" fill="#dcdcdc"/><ellipse cx="330.6" cy="141.2" rx="5.6" ry="3.8" fill="#f6f6f6"/><ellipse cx="358.6" cy="140.6" rx="5.8" ry="3.8" fill="#f6f6f6"/><path d="M324 137 L327 134 L329 139 Z M362 134 L366 136 L364 139 Z" fill="#e8e8e8"/><circle cx="331.4" cy="142.2" r="0.8" fill="#777"/><circle cx="358" cy="141.6" r="0.8" fill="#777"/><ellipse cx="329.8" cy="124.4" rx="6.8" ry="12.4" fill="#040404"/><ellipse cx="359.4" cy="124.4" rx="7.2" ry="11.8" fill="#040404"/><ellipse cx="352" cy="126" rx="3" ry="8" fill="#1a1a1a"/><ellipse cx="317.8" cy="123" rx="2.4" ry="7.4" fill="#101010" transform="rotate(6 317.8 123)"/><ellipse cx="371.4" cy="119.4" rx="2.8" ry="6.6" fill="#101010" transform="rotate(-16 371.4 119.4)"/><path d="M311.5 110 L312.3 110 L312.7 134 L311.9 134Z" fill="#2a2a2a"/></g><g filter="url(#cb)"><clipPath id="cbr"><path d="M348.5 146.7 Q347.0 147.4 345.3 146.4 Q343.6 145.4 341.8 145.2 Q340.0 145.0 338.0 145.8 Q336.0 146.6 334.0 146.3 Q332.0 146.0 330.0 147.2 Q328.0 148.4 326.5 148.5 Q325.0 148.6 323.5 150.3 Q322.0 152.0 320.8 152.8 Q319.5 153.6 318.9 155.8 Q318.4 158.0 317.6 159.5 Q316.8 161.0 317.2 163.0 Q317.6 165.0 317.0 166.7 Q316.4 168.4 317.4 170.2 Q318.4 172.0 318.3 173.8 Q318.2 175.6 319.6 176.8 Q321.0 178.0 321.5 179.5 Q322.0 181.0 323.8 181.8 Q325.6 182.6 326.3 184.0 Q327.0 185.4 329.0 185.5 Q331.0 185.6 332.0 187.0 Q333.0 188.4 335.0 188.0 Q337.0 187.6 338.3 189.0 Q339.6 190.4 341.3 189.5 Q343.0 188.6 344.0 189.1 Q345.0 189.6 346.0 188.0 Q347.0 186.4 348.2 188.1 Q349.4 189.8 350.7 189.2 Q352.0 188.6 353.8 189.5 Q355.6 190.4 357.0 189.2 Q358.4 188.0 360.2 188.0 Q362.0 188.0 363.2 186.5 Q364.4 185.0 366.2 184.7 Q368.0 184.4 368.8 182.7 Q369.6 181.0 371.3 180.2 Q373.0 179.4 373.3 177.5 Q373.6 175.6 374.9 174.1 Q376.2 172.6 375.9 170.6 Q375.6 168.6 376.6 166.8 Q377.6 165.0 376.7 163.2 Q375.8 161.4 376.2 159.5 Q376.6 157.6 375.3 156.3 Q374.0 155.0 373.5 153.3 Q373.0 151.6 371.3 151.0 Q369.6 150.4 368.3 149.0 Q367.0 147.6 365.0 147.6 Q363.0 147.6 361.5 146.5 Q360.0 145.4 358.2 146.0 Q356.4 146.6 354.7 145.8 Q353.0 145.0 351.5 145.5 Q350.0 146.0 348.5 146.7 Z"/></clipPath><path d="M348.5 146.7 Q347.0 147.4 345.3 146.4 Q343.6 145.4 341.8 145.2 Q340.0 145.0 338.0 145.8 Q336.0 146.6 334.0 146.3 Q332.0 146.0 330.0 147.2 Q328.0 148.4 326.5 148.5 Q325.0 148.6 323.5 150.3 Q322.0 152.0 320.8 152.8 Q319.5 153.6 318.9 155.8 Q318.4 158.0 317.6 159.5 Q316.8 161.0 317.2 163.0 Q317.6 165.0 317.0 166.7 Q316.4 168.4 317.4 170.2 Q318.4 172.0 318.3 173.8 Q318.2 175.6 319.6 176.8 Q321.0 178.0 321.5 179.5 Q322.0 181.0 323.8 181.8 Q325.6 182.6 326.3 184.0 Q327.0 185.4 329.0 185.5 Q331.0 185.6 332.0 187.0 Q333.0 188.4 335.0 188.0 Q337.0 187.6 338.3 189.0 Q339.6 190.4 341.3 189.5 Q343.0 188.6 344.0 189.1 Q345.0 189.6 346.0 188.0 Q347.0 186.4 348.2 188.1 Q349.4 189.8 350.7 189.2 Q352.0 188.6 353.8 189.5 Q355.6 190.4 357.0 189.2 Q358.4 188.0 360.2 188.0 Q362.0 188.0 363.2 186.5 Q364.4 185.0 366.2 184.7 Q368.0 184.4 368.8 182.7 Q369.6 181.0 371.3 180.2 Q373.0 179.4 373.3 177.5 Q373.6 175.6 374.9 174.1 Q376.2 172.6 375.9 170.6 Q375.6 168.6 376.6 166.8 Q377.6 165.0 376.7 163.2 Q375.8 161.4 376.2 159.5 Q376.6 157.6 375.3 156.3 Q374.0 155.0 373.5 153.3 Q373.0 151.6 371.3 151.0 Q369.6 150.4 368.3 149.0 Q367.0 147.6 365.0 147.6 Q363.0 147.6 361.5 146.5 Q360.0 145.4 358.2 146.0 Q356.4 146.6 354.7 145.8 Q353.0 145.0 351.5 145.5 Q350.0 146.0 348.5 146.7 Z" fill="#3273c9"/><g clip-path="url(#cbr)"><path d="M348.5 146.7 Q347.0 147.4 345.3 146.4 Q343.6 145.4 341.8 145.2 Q340.0 145.0 338.0 145.8 Q336.0 146.6 334.0 146.3 Q332.0 146.0 330.0 147.2 Q328.0 148.4 326.5 148.5 Q325.0 148.6 323.5 150.3 Q322.0 152.0 320.8 152.8 Q319.5 153.6 318.9 155.8 Q318.4 158.0 317.6 159.5 Q316.8 161.0 317.2 163.0 Q317.6 165.0 317.0 166.7 Q316.4 168.4 317.4 170.2 Q318.4 172.0 318.3 173.8 Q318.2 175.6 319.6 176.8 Q321.0 178.0 321.5 179.5 Q322.0 181.0 323.8 181.8 Q325.6 182.6 326.3 184.0 Q327.0 185.4 329.0 185.5 Q331.0 185.6 332.0 187.0 Q333.0 188.4 335.0 188.0 Q337.0 187.6 338.3 189.0 Q339.6 190.4 341.3 189.5 Q343.0 188.6 344.0 189.1 Q345.0 189.6 346.0 188.0 Q347.0 186.4 348.2 188.1 Q349.4 189.8 350.7 189.2 Q352.0 188.6 353.8 189.5 Q355.6 190.4 357.0 189.2 Q358.4 188.0 360.2 188.0 Q362.0 188.0 363.2 186.5 Q364.4 185.0 366.2 184.7 Q368.0 184.4 368.8 182.7 Q369.6 181.0 371.3 180.2 Q373.0 179.4 373.3 177.5 Q373.6 175.6 374.9 174.1 Q376.2 172.6 375.9 170.6 Q375.6 168.6 376.6 166.8 Q377.6 165.0 376.7 163.2 Q375.8 161.4 376.2 159.5 Q376.6 157.6 375.3 156.3 Q374.0 155.0 373.5 153.3 Q373.0 151.6 371.3 151.0 Q369.6 150.4 368.3 149.0 Q367.0 147.6 365.0 147.6 Q363.0 147.6 361.5 146.5 Q360.0 145.4 358.2 146.0 Q356.4 146.6 354.7 145.8 Q353.0 145.0 351.5 145.5 Q350.0 146.0 348.5 146.7 Z" fill="#fbc8a9" transform="translate(347 168) scale(0.935 0.91) translate(-347 -168)"/><g fill="none" stroke="#3273c9" stroke-linecap="round" stroke-linejoin="round"><path d="M347.4 143.0 L347.5 145.2 L347.2 147.4 L346.2 149.6 L347.5 151.8 L347.4 154.0 L347.2 156.2 L348.3 158.4 L347.4 160.6 L347.0 162.8 L346.6 165.0 L348.5 167.2 L348.0 169.4 L348.5 171.6 L346.5 173.8 L346.9 176.0 L348.7 178.2 L346.0 180.4 L346.1 182.6 L347.0 184.8 L347.1 187.0 L348.4 189.2" stroke-width="3.4"/><path d="M347.4 143.0 L347.5 145.2 L347.2 147.4 L346.2 149.6 L347.5 151.8 L347.4 154.0 L347.2 156.2 L348.3 158.4 L347.4 160.6 L347.0 162.8 L346.6 165.0" stroke-width="5.4"/><path d="M342 150 L347 154 L352 149 M343 171 L347 167 L352 172 M344 178 L347.6 174" stroke-width="2.4"/><path d="M377.0 168.0 L375.4 169.4 L373.4 169.9 L371.7 171.1 L369.5 170.9" stroke-width="2.2"/><path d="M376.1 173.6 L374.2 173.0 L372.4 172.1 L370.3 171.9 L368.3 171.7" stroke-width="2.9"/><path d="M374.1 177.9 L372.2 177.2 L370.3 176.4 L368.7 175.3 L366.7 174.7 L365.7 172.4 L363.6 172.1 L362.3 170.3 L360.1 170.2" stroke-width="2.8"/><path d="M371.5 181.3 L369.8 179.9 L367.6 180.3 L366.0 178.7 L363.7 179.4 L361.6 179.6" stroke-width="2.4"/><path d="M368.0 184.4 L366.0 184.1 L364.5 182.2 L362.5 181.9 L360.1 182.6 L358.3 181.7 L356.3 181.3" stroke-width="1.7"/><path d="M363.6 187.1 L362.3 185.6 L360.6 184.4 L360.3 182.1 L358.0 181.4 L357.7 179.1" stroke-width="1.8"/><path d="M359.5 188.9 L359.0 186.7 L357.4 185.5 L355.2 184.7 L354.9 182.3 L352.4 181.8" stroke-width="2.1"/><path d="M353.4 190.5 L353.1 188.2 L350.6 187.5 L349.6 185.8 L349.4 183.5 L347.4 182.4 L346.3 180.8 L344.7 179.4" stroke-width="1.7"/><path d="M348.5 191.0 L348.2 189.0 L348.4 187.0 L349.6 185.0 L348.6 183.0 L348.8 181.0" stroke-width="2.7"/><path d="M343.8 190.9 L345.3 189.4 L345.1 187.0 L345.9 185.2 L347.9 184.0 L349.2 182.4" stroke-width="1.9"/><path d="M336.8 189.6 L337.6 187.8 L338.0 185.7 L338.9 183.9 L341.7 183.2 L341.3 180.7 L343.2 179.5 L343.3 177.2 L345.4 176.1" stroke-width="2.4"/><path d="M333.0 188.4 L333.8 186.3 L335.4 185.1 L337.3 184.2 L339.2 183.2 L340.2 181.4" stroke-width="2.0"/><path d="M327.3 185.4 L327.8 183.4 L329.0 181.7 L329.1 179.6 L330.3 177.9 L331.5 176.3" stroke-width="2.3"/><path d="M324.6 183.3 L326.9 183.8 L328.6 182.5 L330.5 182.0 L332.4 181.2 L334.0 179.7 L335.8 178.9" stroke-width="1.6"/><path d="M320.5 178.8 L322.5 177.7 L324.5 179.0 L326.5 178.6 L328.5 179.1 L330.5 178.2 L332.5 179.7 L334.5 177.6" stroke-width="2.3"/><path d="M318.5 175.1 L320.5 175.5 L322.5 175.6 L324.5 175.7 L326.4 174.4 L328.5 175.0 L330.5 175.3 L332.5 175.2 L334.4 174.1" stroke-width="2.6"/><path d="M317.2 170.8 L319.2 170.5 L321.2 171.0 L323.2 171.1 L325.2 169.9" stroke-width="2.4"/><path d="M317.1 166.3 L319.1 166.5 L320.8 167.8 L322.9 167.9 L324.9 168.1 L326.6 169.4 L329.0 168.3" stroke-width="2.6"/><path d="M317.5 163.7 L319.6 163.4 L321.4 164.7 L323.5 164.5 L325.4 165.0" stroke-width="2.8"/><path d="M319.2 159.3 L321.2 160.0 L323.3 159.2" stroke-width="1.8"/><path d="M322.6 154.6 L324.0 156.3 L326.4 156.0 L327.8 157.6 L330.1 157.5 L331.7 158.9" stroke-width="2.6"/><path d="M326.2 151.4 L327.8 152.6 L329.8 153.3 L331.7 154.0 L332.9 155.8 L334.2 157.5 L335.8 158.6" stroke-width="2.5"/><path d="M330.6 148.7 L332.4 149.8 L334.2 150.6 L335.9 151.6" stroke-width="2.1"/><path d="M334.9 147.0 L335.5 149.0 L336.5 150.8 L338.7 151.6 L340.6 152.6" stroke-width="1.6"/><path d="M340.7 145.5 L340.7 147.5 L341.5 149.4" stroke-width="2.6"/><path d="M344.3 145.1 L345.6 146.9 L344.2 149.2 L345.8 150.9" stroke-width="1.8"/><path d="M349.9 145.1 L349.4 147.1 L349.2 149.1 L348.7 151.0 L348.2 153.0 L348.6 155.0" stroke-width="1.9"/><path d="M356.2 146.1 L356.3 148.1 L355.7 150.1 L356.9 152.1" stroke-width="2.0"/><path d="M361.1 147.7 L359.7 149.2 L358.3 150.6 L357.8 152.7 L355.9 153.8 L354.5 155.3" stroke-width="1.7"/><path d="M366.7 150.6 L365.7 152.4 L364.4 153.9 L362.8 155.3 L362.7 157.6 L361.3 159.1" stroke-width="2.7"/><path d="M370.3 153.5 L368.5 154.4 L367.3 156.3 L365.0 156.4 L363.3 157.4 L361.8 158.8 L360.0 159.8" stroke-width="1.9"/><path d="M373.5 157.2 L371.5 157.1 L369.5 156.6 L367.5 157.6 L365.5 156.4 L363.5 156.5 L361.5 157.6" stroke-width="1.7"/><path d="M375.3 160.4 L373.3 160.5 L371.4 161.6 L369.3 160.0 L367.4 161.7" stroke-width="2.6"/><path d="M376.6 164.1 L374.5 164.7 L372.5 164.4 L370.6 163.4" stroke-width="2.5"/></g></g><circle cx="365.4" cy="163.4" r="0.8" fill="#fff"/></g></g></svg>
<svg width="299" height="162.2" viewBox="197 276 299 162.2" style="left:197px;top:276px;background:#000"><defs><filter id="sb" x="-10%" y="-10%" width="120%" height="120%"><feGaussianBlur stdDeviation="0.6"/></filter><filter id="sb2" x="-20%" y="-20%" width="140%" height="140%"><feGaussianBlur stdDeviation="1.4"/></filter><filter id="sb3" x="-20%" y="-20%" width="140%" height="140%"><feGaussianBlur stdDeviation="0.7"/></filter><clipPath id="scut"><path d="M276.6 301 L336.5 287 L440 262 L440 450 L305 440 Z"/></clipPath><clipPath id="shead"><path d="M337.5 287.0 Q345.0 286.4 352.5 287.0 Q360.0 287.6 367.0 290.0 Q374.0 292.4 381.5 298.4 Q389.0 304.4 395.5 314.2 Q402.0 324.0 406.5 335.0 Q411.0 346.0 413.1 357.0 Q415.3 368.0 414.4 377.5 Q413.4 387.0 409.7 396.4 Q406.0 405.7 398.9 413.0 Q391.7 420.4 381.4 426.0 Q371.0 431.6 360.8 433.8 Q350.6 436.0 340.3 435.2 Q330.0 434.4 320.0 435.2 Q310.0 436.0 300.0 438.0 Q290.0 440.0 280.0 410.0 Q270.0 380.0 266.0 340.0 Q262.0 300.0 281.0 296.0 Q300.0 292.0 315.0 289.8 Q330.0 287.6 337.5 287.0 Z"/></clipPath></defs><g clip-path="url(#scut)"><g clip-path="url(#shead)"><g filter="url(#sb3)"><path d="M337.5 287.0 Q345.0 286.4 352.5 287.0 Q360.0 287.6 367.0 290.0 Q374.0 292.4 381.5 298.4 Q389.0 304.4 395.5 314.2 Q402.0 324.0 406.5 335.0 Q411.0 346.0 413.1 357.0 Q415.3 368.0 414.4 377.5 Q413.4 387.0 409.7 396.4 Q406.0 405.7 398.9 413.0 Q391.7 420.4 381.4 426.0 Q371.0 431.6 360.8 433.8 Q350.6 436.0 340.3 435.2 Q330.0 434.4 320.0 435.2 Q310.0 436.0 300.0 438.0 Q290.0 440.0 280.0 410.0 Q270.0 380.0 266.0 340.0 Q262.0 300.0 281.0 296.0 Q300.0 292.0 315.0 289.8 Q330.0 287.6 337.5 287.0 Z" fill="#efefef"/><path d="M337.5 287.0 Q345.0 286.4 352.5 287.0 Q360.0 287.6 367.0 290.0 Q374.0 292.4 381.5 298.4 Q389.0 304.4 395.5 314.2 Q402.0 324.0 406.5 335.0 Q411.0 346.0 413.1 357.0 Q415.3 368.0 414.4 377.5 Q413.4 387.0 409.7 396.4 Q406.0 405.7 398.9 413.0 Q391.7 420.4 381.4 426.0 Q371.0 431.6 360.8 433.8 Q350.6 436.0 340.3 435.2 Q330.0 434.4 320.0 435.2 Q310.0 436.0 300.0 438.0 Q290.0 440.0 280.0 410.0 Q270.0 380.0 266.0 340.0 Q262.0 300.0 281.0 296.0 Q300.0 292.0 315.0 289.8 Q330.0 287.6 337.5 287.0 Z" fill="#a8a8a8" transform="translate(340 345) scale(0.945 0.955) translate(-340 -345)"/><path d="M337.5 287.0 Q345.0 286.4 352.5 287.0 Q360.0 287.6 367.0 290.0 Q374.0 292.4 381.5 298.4 Q389.0 304.4 395.5 314.2 Q402.0 324.0 406.5 335.0 Q411.0 346.0 413.1 357.0 Q415.3 368.0 414.4 377.5 Q413.4 387.0 409.7 396.4 Q406.0 405.7 398.9 413.0 Q391.7 420.4 381.4 426.0 Q371.0 431.6 360.8 433.8 Q350.6 436.0 340.3 435.2 Q330.0 434.4 320.0 435.2 Q310.0 436.0 300.0 438.0 Q290.0 440.0 280.0 410.0 Q270.0 380.0 266.0 340.0 Q262.0 300.0 281.0 296.0 Q300.0 292.0 315.0 289.8 Q330.0 287.6 337.5 287.0 Z" fill="#747474" transform="translate(340 345) scale(0.895 0.928) translate(-340 -345)"/><path d="M337.5 287.0 Q345.0 286.4 352.5 287.0 Q360.0 287.6 367.0 290.0 Q374.0 292.4 381.5 298.4 Q389.0 304.4 395.5 314.2 Q402.0 324.0 406.5 335.0 Q411.0 346.0 413.1 357.0 Q415.3 368.0 414.4 377.5 Q413.4 387.0 409.7 396.4 Q406.0 405.7 398.9 413.0 Q391.7 420.4 381.4 426.0 Q371.0 431.6 360.8 433.8 Q350.6 436.0 340.3 435.2 Q330.0 434.4 320.0 435.2 Q310.0 436.0 300.0 438.0 Q290.0 440.0 280.0 410.0 Q270.0 380.0 266.0 340.0 Q262.0 300.0 281.0 296.0 Q300.0 292.0 315.0 289.8 Q330.0 287.6 337.5 287.0 Z" fill="#2c2c2c" transform="translate(340 345) scale(0.84 0.9) translate(-340 -345)"/></g><g filter="url(#sb2)"><path d="M270 296 L345 284 L345 300 L335 326 L318 333 L312 350 L321 366 L326 376 L309 385 L306 396 L312 410 L330 422 L320 440 L300 440 Z" fill="#5e5e5e"/><path d="M276 301 L300 295.6 L298 312 L290 332 L284 336 Z" fill="#c4c4c4"/><path d="M279 304 L284 303 L290 330 L286 334 Z" fill="#8a8a8a"/><path d="M304 295 L318 292 L321 299 L313 306 L306 302 Z" fill="#f0f0f0"/><path d="M308 318 L316 311 L324 314 L318 324 Z" fill="#dedede"/><path d="M286 340 L312 322 L331 317 L333 322.6 L315 330 L291 348 Z" fill="#ececec"/><path d="M336 289 L348 287 L346 296 L340 300 Z" fill="#d0d0d0"/><path d="M338 300 L341 301 L338 318 L334 326 L331 325 L335 314 Z" fill="#c8c8c8"/><path d="M290 354 L308 346 L310 355 L295 366 Z" fill="#a8a8a8"/><path d="M293 372 L303 367 L305 390 L299 404 L295 396 Z" fill="#969696"/><path d="M286 344 L291 342 L297 374 L293 382 Z" fill="#2e2e2e"/><path d="M300 352 L312 350 L318 360 L306 366 Z" fill="#282828"/><path d="M304 362 L317 359 L325 373 L312 381 Z" fill="#141414"/><path d="M297 400 L303 398 L308 410 L304 416 Z" fill="#b0b0b0"/><path d="M300 410 L312 413 L327 423 L316 428 L302 424 Z" fill="#2c2c2c"/></g><g filter="url(#sb)"><path d="M299.6 417 L306 422.6 L318 426.6 L334 429.6 L352 431 L352 437 L303 437 Z" fill="#f2f2f2"/><path d="M296.6 316 Q298 309 305.6 307.2 Q309.4 312 307.6 318 Q302 320.4 296.6 316Z" fill="#060606"/><ellipse cx="326" cy="303" rx="8" ry="6.6" fill="#060606" transform="rotate(-14 326 303)"/><ellipse cx="326" cy="303" rx="9.6" ry="8.2" fill="none" stroke="#a4a4a4" stroke-width="1.1" transform="rotate(-14 326 303)"/></g><g filter="url(#sb)"><clipPath id="sbr"><path d="M340.0 302.3 Q342.0 298.6 345.0 298.1 Q348.0 297.6 353.0 299.3 Q358.0 301.0 362.5 303.8 Q367.0 306.6 373.5 313.3 Q380.0 320.0 384.0 325.5 Q388.0 331.0 390.8 336.3 Q393.5 341.6 395.2 346.8 Q397.0 352.0 397.5 357.8 Q398.0 363.5 397.8 369.8 Q397.6 376.0 396.8 381.5 Q396.0 387.0 394.0 391.5 Q392.0 396.0 388.8 399.8 Q385.6 403.6 381.8 407.3 Q378.0 411.0 374.5 413.5 Q371.0 416.0 365.5 418.3 Q360.0 420.6 355.3 421.8 Q350.6 423.0 345.3 422.8 Q340.0 422.6 335.0 421.3 Q330.0 420.0 325.0 417.8 Q320.0 415.6 316.2 412.6 Q312.5 409.5 309.8 405.8 Q307.0 402.0 306.5 398.8 Q306.0 395.5 306.5 392.2 Q307.0 389.0 308.5 386.8 Q310.0 384.6 314.0 382.8 Q318.0 381.0 321.5 379.0 Q325.0 377.0 324.0 373.5 Q323.0 370.0 321.5 367.0 Q320.0 364.0 317.5 360.5 Q315.0 357.0 313.8 353.5 Q312.5 350.0 312.8 346.0 Q313.0 342.0 314.5 338.5 Q316.0 335.0 319.0 333.3 Q322.0 331.6 326.0 330.3 Q330.0 329.0 332.5 327.0 Q335.0 325.0 335.8 320.5 Q336.6 316.0 337.3 311.0 Q338.0 306.0 340.0 302.3 Z"/></clipPath><path d="M340.0 302.3 Q342.0 298.6 345.0 298.1 Q348.0 297.6 353.0 299.3 Q358.0 301.0 362.5 303.8 Q367.0 306.6 373.5 313.3 Q380.0 320.0 384.0 325.5 Q388.0 331.0 390.8 336.3 Q393.5 341.6 395.2 346.8 Q397.0 352.0 397.5 357.8 Q398.0 363.5 397.8 369.8 Q397.6 376.0 396.8 381.5 Q396.0 387.0 394.0 391.5 Q392.0 396.0 388.8 399.8 Q385.6 403.6 381.8 407.3 Q378.0 411.0 374.5 413.5 Q371.0 416.0 365.5 418.3 Q360.0 420.6 355.3 421.8 Q350.6 423.0 345.3 422.8 Q340.0 422.6 335.0 421.3 Q330.0 420.0 325.0 417.8 Q320.0 415.6 316.2 412.6 Q312.5 409.5 309.8 405.8 Q307.0 402.0 306.5 398.8 Q306.0 395.5 306.5 392.2 Q307.0 389.0 308.5 386.8 Q310.0 384.6 314.0 382.8 Q318.0 381.0 321.5 379.0 Q325.0 377.0 324.0 373.5 Q323.0 370.0 321.5 367.0 Q320.0 364.0 317.5 360.5 Q315.0 357.0 313.8 353.5 Q312.5 350.0 312.8 346.0 Q313.0 342.0 314.5 338.5 Q316.0 335.0 319.0 333.3 Q322.0 331.6 326.0 330.3 Q330.0 329.0 332.5 327.0 Q335.0 325.0 335.8 320.5 Q336.6 316.0 337.3 311.0 Q338.0 306.0 340.0 302.3 Z" fill="#3273c9"/><g clip-path="url(#sbr)"><path d="M340.0 302.3 Q342.0 298.6 345.0 298.1 Q348.0 297.6 353.0 299.3 Q358.0 301.0 362.5 303.8 Q367.0 306.6 373.5 313.3 Q380.0 320.0 384.0 325.5 Q388.0 331.0 390.8 336.3 Q393.5 341.6 395.2 346.8 Q397.0 352.0 397.5 357.8 Q398.0 363.5 397.8 369.8 Q397.6 376.0 396.8 381.5 Q396.0 387.0 394.0 391.5 Q392.0 396.0 388.8 399.8 Q385.6 403.6 381.8 407.3 Q378.0 411.0 374.5 413.5 Q371.0 416.0 365.5 418.3 Q360.0 420.6 355.3 421.8 Q350.6 423.0 345.3 422.8 Q340.0 422.6 335.0 421.3 Q330.0 420.0 325.0 417.8 Q320.0 415.6 316.2 412.6 Q312.5 409.5 309.8 405.8 Q307.0 402.0 306.5 398.8 Q306.0 395.5 306.5 392.2 Q307.0 389.0 308.5 386.8 Q310.0 384.6 314.0 382.8 Q318.0 381.0 321.5 379.0 Q325.0 377.0 324.0 373.5 Q323.0 370.0 321.5 367.0 Q320.0 364.0 317.5 360.5 Q315.0 357.0 313.8 353.5 Q312.5 350.0 312.8 346.0 Q313.0 342.0 314.5 338.5 Q316.0 335.0 319.0 333.3 Q322.0 331.6 326.0 330.3 Q330.0 329.0 332.5 327.0 Q335.0 325.0 335.8 320.5 Q336.6 316.0 337.3 311.0 Q338.0 306.0 340.0 302.3 Z" fill="#fbc8a9" transform="translate(355 362) scale(0.96 0.965) translate(-355 -362)"/><g fill="none" stroke="#3273c9" stroke-linecap="round" stroke-linejoin="round"><path d="M347.5 297.7 L347.9 299.9 L346.2 301.5 L346.0 303.5 L345.2 305.3 L345.6 307.5 L344.9 309.4" stroke-width="2.7"/><path d="M345.6 307.5 L346.7 309.2 L348.5 310.4 L348.6 312.7" stroke-width="1.7"/><path d="M346.6 297.8 L347.9 299.4 L349.2 301.0 L350.1 302.8" stroke-width="3.2"/><path d="M356.6 300.5 L355.7 302.7 L356.9 304.5 L356.6 306.6 L358.4 308.4 L357.9 310.4 L357.4 312.5" stroke-width="3.1"/><path d="M356.6 306.6 L358.5 307.3 L360.6 307.1" stroke-width="1.7"/><path d="M353.7 299.5 L353.8 301.5 L355.3 303.3 L353.8 305.6 L354.9 307.4 L354.5 309.5 L355.8 311.3" stroke-width="2.3"/><path d="M355.8 311.3 L357.9 311.4 L359.7 312.4 L361.5 313.5" stroke-width="1.9"/><path d="M366.5 306.3 L366.1 308.5 L364.2 309.5 L363.7 311.7" stroke-width="3.3"/><path d="M366.8 306.5 L365.5 308.0 L363.4 308.9 L362.6 310.8 L362.2 313.0 L359.8 313.7 L359.7 316.1" stroke-width="2.3"/><path d="M359.8 313.7 L361.1 315.2 L362.4 316.8" stroke-width="1.9"/><path d="M375.4 315.3 L375.0 317.4 L374.4 319.3 L373.3 321.0 L372.6 322.9 L370.1 323.8" stroke-width="3.1"/><path d="M373.3 321.0 L374.2 322.8 L375.2 324.5" stroke-width="1.9"/><path d="M370.1 309.8 L369.0 311.6 L369.0 313.6 L368.6 315.6" stroke-width="3.3"/><path d="M369.0 313.6 L367.2 314.6 L364.9 313.8 L363.4 315.9" stroke-width="1.9"/><path d="M384.3 326.0 L383.0 327.5 L381.7 328.9 L379.8 330.0" stroke-width="2.0"/><path d="M381.7 328.9 L383.0 330.7 L382.4 332.9 L382.7 334.9" stroke-width="2.3"/><path d="M383.4 324.6 L381.1 325.3 L380.2 327.2 L379.8 329.5" stroke-width="2.9"/><path d="M380.2 327.2 L378.2 327.3 L376.2 327.9 L374.2 327.1" stroke-width="1.7"/><path d="M391.7 338.2 L390.0 339.3 L387.6 338.4 L386.3 340.8 L384.4 341.6" stroke-width="3.4"/><path d="M392.2 339.0 L390.2 339.6 L388.8 341.2 L386.5 341.2 L384.6 342.0 L383.9 344.7 L381.9 345.3" stroke-width="3.0"/><path d="M394.5 344.5 L394.0 346.7 L391.4 347.1 L391.3 349.7 L388.9 350.2 L387.9 352.1" stroke-width="2.8"/><path d="M391.4 347.1 L389.5 346.3 L387.3 347.4" stroke-width="2.0"/><path d="M394.9 345.7 L393.8 347.7 L391.0 347.1 L389.7 348.7 L388.7 350.8 L385.9 350.3" stroke-width="3.5"/><path d="M391.0 347.1 L389.1 346.4 L388.0 344.4 L385.7 344.3" stroke-width="2.1"/><path d="M397.0 352.5 L395.1 353.5 L393.1 353.7" stroke-width="2.6"/><path d="M397.2 354.5 L395.4 353.4 L393.2 354.2 L391.4 352.9 L389.7 351.6 L387.6 351.8 L385.6 351.6" stroke-width="2.4"/><path d="M397.7 372.8 L396.2 371.1 L394.0 371.1 L391.9 371.1 L390.5 369.1" stroke-width="2.5"/><path d="M397.8 369.6 L395.8 369.6 L394.0 371.0 L391.9 370.9 L389.9 370.9" stroke-width="2.1"/><path d="M396.8 381.2 L395.2 380.1 L394.7 377.7 L391.7 377.9" stroke-width="2.5"/><path d="M397.0 380.4 L394.7 380.8 L393.5 378.1 L391.4 378.0 L389.7 377.0" stroke-width="2.3"/><path d="M393.5 378.1 L391.6 378.9 L390.5 380.8" stroke-width="1.7"/><path d="M395.8 387.5 L394.4 385.7 L392.3 385.4" stroke-width="3.1"/><path d="M394.9 389.5 L392.7 389.1 L391.8 386.9 L390.1 385.9" stroke-width="2.9"/><path d="M391.8 386.9 L392.7 385.1 L391.9 382.9 L392.1 380.9" stroke-width="1.8"/><path d="M390.7 397.6 L390.2 395.5 L388.2 394.4 L388.0 392.2 L386.4 390.8 L386.4 388.5" stroke-width="3.5"/><path d="M389.8 398.6 L388.3 397.3 L386.6 396.1 L384.6 395.6 L382.3 395.7 L381.3 393.3" stroke-width="2.2"/><path d="M380.3 408.8 L379.7 406.6 L377.6 405.8 L376.6 404.0" stroke-width="3.5"/><path d="M376.6 404.0 L374.9 405.0 L372.8 405.1" stroke-width="2.3"/><path d="M380.7 408.4 L379.6 406.6 L378.1 405.3 L375.5 405.2 L375.2 402.5 L372.7 402.3 L371.3 400.9" stroke-width="2.1"/><path d="M377.0 411.7 L375.8 409.9 L374.2 408.8 L372.3 408.0 L370.7 406.8 L369.4 405.2 L367.6 404.3" stroke-width="2.2"/><path d="M375.5 412.8 L375.6 410.5 L373.6 409.2 L373.7 407.0 L371.2 406.0 L370.9 403.9" stroke-width="3.1"/><path d="M361.8 419.8 L362.7 417.9 L361.4 415.8 L361.6 413.8" stroke-width="2.9"/><path d="M364.2 418.8 L364.6 416.7 L363.5 414.9 L363.1 412.9 L362.8 411.0" stroke-width="3.5"/><path d="M352.1 422.6 L353.1 420.7 L353.0 418.7 L353.7 416.7" stroke-width="3.5"/><path d="M353.7 416.7 L355.9 416.4 L357.3 414.9" stroke-width="1.4"/><path d="M357.7 421.2 L358.1 419.2 L357.9 417.1 L359.3 415.4 L359.0 413.3" stroke-width="2.1"/><path d="M340.1 422.6 L340.1 420.4 L341.8 419.0 L342.8 417.2 L343.9 415.5 L344.0 413.4" stroke-width="2.1"/><path d="M347.8 422.9 L348.5 420.9 L347.6 418.9 L347.0 416.9 L347.9 414.9 L348.1 412.9" stroke-width="3.3"/><path d="M348.1 412.9 L350.2 412.8 L352.2 412.2" stroke-width="1.3"/><path d="M331.4 420.4 L331.6 418.2 L333.9 417.2 L335.0 415.5 L335.7 413.6 L337.4 412.3 L338.3 410.5" stroke-width="3.0"/><path d="M338.6 422.2 L339.1 420.3 L340.6 418.6 L340.4 416.5" stroke-width="3.0"/><path d="M320.5 415.8 L322.1 414.6 L323.1 412.8 L324.4 411.2 L325.5 409.5" stroke-width="2.0"/><path d="M324.4 411.2 L323.8 409.3 L321.8 408.0" stroke-width="1.7"/><path d="M322.4 416.7 L321.7 414.5 L323.6 412.8" stroke-width="3.4"/><path d="M313.3 410.1 L315.2 409.3 L316.2 407.4 L317.1 405.5 L319.7 405.3 L319.9 402.6 L321.3 401.2" stroke-width="2.3"/><path d="M312.6 409.6 L314.2 408.2 L314.5 406.1 L315.5 404.3 L316.2 402.4" stroke-width="2.7"/><path d="M308.4 403.9 L310.3 403.1 L310.9 400.6 L312.6 399.5 L314.3 398.4 L316.8 398.5 L317.6 396.1" stroke-width="2.2"/><path d="M314.3 398.4 L316.1 399.2 L317.7 400.4" stroke-width="1.9"/><path d="M307.8 403.1 L309.9 403.0 L311.4 401.2 L313.4 401.0 L315.5 400.9 L317.4 400.2" stroke-width="3.2"/><path d="M306.2 396.6 L307.4 394.7 L309.7 394.7 L311.7 394.3 L313.7 393.7" stroke-width="3.4"/><path d="M309.7 394.7 L310.4 392.8 L310.1 390.7" stroke-width="2.1"/><path d="M306.8 400.7 L308.9 400.2 L309.1 397.3 L311.1 396.5" stroke-width="2.8"/><path d="M311.1 396.5 L312.9 397.6 L314.8 398.1" stroke-width="2.2"/><path d="M306.1 394.7 L307.1 392.9 L309.5 392.4 L309.8 390.0 L310.9 388.2 L313.4 387.9" stroke-width="2.8"/><path d="M309.8 390.0 L311.8 390.7 L313.7 391.1 L315.9 389.8" stroke-width="1.3"/><path d="M306.2 394.3 L307.9 393.4 L309.9 392.8" stroke-width="2.9"/><path d="M309.3 385.6 L310.1 383.5 L313.0 383.7 L313.0 380.8 L314.6 379.6 L316.2 378.4 L319.1 378.6" stroke-width="3.5"/><path d="M309.1 385.9 L310.6 384.7 L312.5 383.8 L314.2 382.7 L315.9 381.6" stroke-width="2.9"/><path d="M314.2 382.7 L312.9 381.0 L313.1 378.9 L312.5 376.9" stroke-width="1.9"/><path d="M310.3 384.5 L312.3 384.5 L314.3 384.7 L316.3 385.0 L318.3 384.9 L320.3 384.8" stroke-width="2.8"/><path d="M318.3 384.9 L319.8 383.4 L320.0 381.3" stroke-width="1.6"/><path d="M316.3 381.8 L318.4 381.2 L318.7 378.4 L321.5 378.6" stroke-width="2.6"/><path d="M322.8 378.2 L323.7 376.2 L325.9 375.7 L327.0 373.8 L328.8 372.9 L329.8 371.0 L331.3 369.7" stroke-width="2.9"/><path d="M328.8 372.9 L330.2 374.5 L332.5 374.4" stroke-width="1.6"/><path d="M324.7 377.2 L326.7 376.5 L328.7 376.0 L329.8 374.0 L332.1 373.9" stroke-width="2.3"/><path d="M328.7 376.0 L329.4 374.1 L330.1 372.2 L330.4 370.2" stroke-width="1.5"/><path d="M323.5 371.9 L325.3 370.9 L326.6 369.3" stroke-width="2.3"/><path d="M324.1 373.8 L326.0 373.4 L328.1 373.2 L329.7 371.5 L332.0 372.4 L333.9 371.8 L335.9 371.4" stroke-width="2.7"/><path d="M322.8 369.6 L324.8 370.5 L326.8 370.3 L328.7 368.8 L330.8 369.7" stroke-width="3.4"/><path d="M321.0 365.9 L323.2 365.3 L324.8 367.2 L326.8 367.4" stroke-width="3.4"/><path d="M319.0 362.6 L321.1 362.4 L323.0 361.8 L324.5 360.1" stroke-width="2.4"/><path d="M319.0 362.6 L321.0 362.0 L323.0 362.7 L324.9 361.4 L326.9 361.4" stroke-width="2.9"/><path d="M314.6 355.9 L316.6 355.5 L318.6 355.9 L320.6 356.8" stroke-width="2.3"/><path d="M313.9 354.0 L315.8 354.7 L318.0 354.3 L319.6 355.8 L321.7 355.8 L323.4 357.2" stroke-width="3.0"/><path d="M319.6 355.8 L319.7 357.9 L320.6 359.7" stroke-width="2.1"/><path d="M312.5 350.0 L314.4 351.0 L316.5 349.3 L318.5 350.3 L320.5 350.1 L322.5 350.1 L324.5 351.1" stroke-width="3.2"/><path d="M312.9 343.8 L315.0 343.8 L316.7 344.9 L318.4 346.2" stroke-width="3.5"/><path d="M316.7 344.9 L317.1 346.9 L317.8 348.9" stroke-width="2.0"/><path d="M314.9 337.6 L314.9 339.9 L316.4 341.3" stroke-width="3.3"/><path d="M313.1 341.8 L315.3 341.3 L316.8 343.3 L318.8 343.7" stroke-width="2.6"/><path d="M317.4 334.2 L319.5 334.3 L320.8 336.4 L323.0 336.3" stroke-width="3.2"/><path d="M320.0 332.7 L321.7 334.2 L321.7 336.4 L321.3 338.7 L322.5 340.3" stroke-width="2.6"/><path d="M328.1 329.6 L329.2 331.3 L330.7 332.6 L331.9 334.3 L333.9 335.1 L334.7 337.2" stroke-width="3.2"/><path d="M333.9 335.1 L332.5 336.8 L333.0 339.0" stroke-width="2.1"/><path d="M328.7 329.4 L330.2 330.9 L330.9 332.8 L331.8 334.6 L332.2 336.6" stroke-width="2.8"/><path d="M332.2 336.6 L330.6 338.0 L329.5 339.7 L327.8 340.8" stroke-width="1.4"/><path d="M334.1 325.7 L334.9 327.6 L335.8 329.4 L337.9 330.4 L338.6 332.3 L339.6 334.0 L341.0 335.5" stroke-width="2.2"/><path d="M331.0 328.2 L333.1 328.8 L333.9 330.9 L335.8 331.9" stroke-width="3.6"/><path d="M335.2 324.1 L336.3 325.7 L337.3 327.5 L338.9 328.8 L339.6 330.8 L341.5 331.9 L342.4 333.7" stroke-width="3.5"/><path d="M336.2 318.2 L336.5 320.2 L338.8 321.5 L337.3 324.2 L339.3 325.6" stroke-width="2.1"/><path d="M339.3 325.6 L338.9 327.6 L337.7 329.2 L337.0 331.1" stroke-width="1.3"/><path d="M337.0 313.0 L338.0 314.8 L339.4 316.5" stroke-width="2.7"/><path d="M336.9 313.7 L338.7 315.0 L337.7 317.7 L338.5 319.6 L340.9 320.6" stroke-width="3.1"/><path d="M339.0 304.2 L340.3 305.8 L340.7 307.8 L342.5 309.2 L342.9 311.2" stroke-width="3.6"/><path d="M339.3 303.5 L339.2 305.7 L341.1 307.1 L340.6 309.5 L342.3 311.0 L342.0 313.2 L344.4 314.5" stroke-width="2.6"/><path d="M344.4 314.5 L346.5 314.6 L348.4 315.1" stroke-width="1.4"/><path d="M313.8 347 Q322 360 328 376 Q333 390 336 404 Q338 414 341 420" stroke-width="4.2"/><path d="M318 344 Q324 350 327 357 M322 368 Q318 372 316 380 M330 384 Q326 392 327 400 M333 398 Q330 408 332 416" stroke-width="2.4"/><path d="M327.6 356 Q338 368 349 382" stroke-width="1.8" stroke="#4a78b8"/><path d="M336.8 330 Q342 338 346 345 Q352 353 356.7 360.5 Q360 367 361 374" stroke-width="3.6"/><path d="M340 334 Q336 340 338 346 M346 345 Q342 352 344 358 M352 352 Q358 350 360 344 M356 362 Q352 368 354 376" stroke-width="2.4"/><path d="M341.4 303 Q339 314 340 325" stroke-width="3"/><path d="M349 320.7 Q354 330 358 336 Q361 340 361 345" stroke-width="3"/><path d="M349 308 Q352 314 351 320 M356 314 Q362 320 364 328 M366 322 Q372 332 372 340" stroke-width="2.2"/><path d="M310 392 Q316 398 320 408 M314 386 Q322 394 326 406 M308 398 Q312 404 316 412" stroke-width="2"/><path d="M364 386 Q370 384 376 388 M366 394 Q372 398 380 396 M368 390 L370 398" stroke-width="2.6"/><path d="M336 326 Q328 332 324 340 Q322 346 326 352 M330 336 Q334 342 333 350" stroke-width="2.8"/><path d="M309 388 Q316 392 322 402 Q326 410 330 418 M312 382 Q322 388 328 398 Q332 406 334 414 M320 380 Q328 386 333 394" stroke-width="2.4"/><path d="M316 352 Q322 358 324 366 M319 340 Q326 348 330 358" stroke-width="2.6"/><path d="M338 402 Q344 408 346 418 M346 396 Q350 404 352 414" stroke-width="2.2"/></g></g><circle cx="354.7" cy="385" r="2.3" fill="#fff"/><circle cx="360" cy="382.4" r="1.3" fill="#fff"/></g></g></g></svg>
</body></html>
